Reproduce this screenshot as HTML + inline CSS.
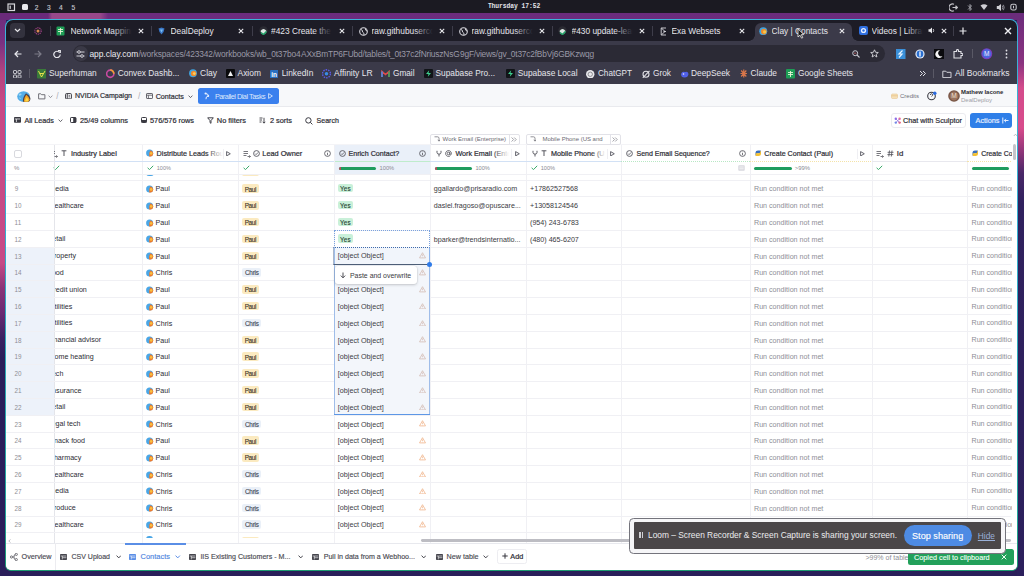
<!DOCTYPE html>
<html><head><meta charset="utf-8"><style>
html,body{margin:0;padding:0;}
body{width:1024px;height:576px;overflow:hidden;position:relative;background:#2a1e5a;font-family:"Liberation Sans",sans-serif;}
</style></head><body>
<div style="position:absolute;left:0px;top:0px;width:1024px;height:576px;background:#2a1e5a"></div>
<div style="position:absolute;left:0px;top:13px;width:6px;height:563px;background:linear-gradient(#6c2c7c 0px,#7a3282 30px,#b4447f 60px,#c84a86 90px,#c64a86 250px,#8a3478 275px,#6a2a72 300px,#3a2262 325px,#2a1e5a 345px)"></div>
<div style="position:absolute;left:1017px;top:13px;width:7px;height:563px;background:linear-gradient(#6c2c7c 0px,#8a3480 50px,#d44c8c 75px,#d84c8c 115px,#8a3478 140px,#4a2868 160px,#30215e 190px,#2b1f5c 100%)"></div>
<div style="position:absolute;left:0px;top:12px;width:1024px;height:8px;background:linear-gradient(90deg,#6a2a7a 0,#6a2a7a 48px,#98488a 52px,#98488a 100px,#6c2c7e 108px,#6b2c7c 100%)"></div>
<div style="position:absolute;left:0px;top:0px;width:1024px;height:13px;background:#1b1a22"></div>
<div style="position:absolute;left:5px;top:19px;width:1013px;height:552px;border-radius:8px 8px 6px 6px;background:linear-gradient(#3cb2da 0,#35aecf 40%,#22a59a 90%,#1c9a70 100%)"></div>
<div style="position:absolute;left:6px;top:20px;width:1011px;height:550px;border-radius:7px 7px 5px 5px;background:#1d1c26;overflow:hidden"></div>
<div style="position:absolute;left:6px;top:41px;width:1011px;height:43px;background:#3b3a49"></div>
<div style="position:absolute;left:6px;top:84px;width:1011px;height:486px;background:#ffffff;border-radius:0 0 5px 5px"></div>
<svg style="position:absolute;left:7px;top:3px;" width="9" height="9" viewBox="0 0 9 9"><rect x="1" y="1" width="6.5" height="6.5" fill="none" stroke="#d8d8dc" stroke-width="1.2"/><rect x="2.6" y="2.6" width="1.2" height="3.3" fill="#d8d8dc"/></svg>
<div style="position:absolute;left:22px;top:4px;width:5.5px;height:6px;background:#e8e8ec;border-radius:1.5px"></div>
<div style="position:absolute;left:34.70px;top:5.00px;font-family:'Liberation Sans';font-size:6.60px;line-height:6.60px;font-weight:400;color:#c4c4cc;white-space:pre;-webkit-text-stroke:0.15px #c4c4cc;">2</div>
<div style="position:absolute;left:47.00px;top:5.00px;font-family:'Liberation Sans';font-size:6.60px;line-height:6.60px;font-weight:400;color:#c4c4cc;white-space:pre;-webkit-text-stroke:0.15px #c4c4cc;">3</div>
<div style="position:absolute;left:59.00px;top:5.00px;font-family:'Liberation Sans';font-size:6.60px;line-height:6.60px;font-weight:400;color:#c4c4cc;white-space:pre;-webkit-text-stroke:0.15px #c4c4cc;">4</div>
<div style="position:absolute;left:71.60px;top:5.00px;font-family:'Liberation Sans';font-size:6.60px;line-height:6.60px;font-weight:400;color:#c4c4cc;white-space:pre;-webkit-text-stroke:0.15px #c4c4cc;">5</div>
<div style="position:absolute;left:487.90px;top:3.75px;font-family:'Liberation Mono';font-size:6.30px;line-height:6.30px;font-weight:700;color:#e4e4ea;white-space:pre;letter-spacing:-0.045px;">Thursday 17:52</div>
<svg style="position:absolute;left:949px;top:3px;" width="9" height="9" viewBox="0 0 9 9"><path d="M5 1.2 A3.6 3.6 0 1 0 5 7.8" fill="none" stroke="#c4c4ca" stroke-width="1.2"/><path d="M3.5 4.5 H8.3 M6.5 2.8 L8.3 4.5 L6.5 6.2" fill="none" stroke="#c4c4ca" stroke-width="1.2"/></svg>
<svg style="position:absolute;left:967px;top:3px;" width="6" height="9" viewBox="0 0 6 9"><path d="M1 2.5 L4.5 6 L3 7.5 V1.5 L4.5 3 L1 6.5" fill="none" stroke="#a8a8b0" stroke-width="0.9"/></svg>
<svg style="position:absolute;left:980px;top:3px;" width="8" height="8" viewBox="0 0 8 8"><path d="M0.5 2.5 Q4 0 7.5 2.5 L4 7 Z" fill="#cfcfd4"/></svg>
<svg style="position:absolute;left:996px;top:3px;" width="9" height="9" viewBox="0 0 9 9"><path d="M0.8 3 H2.5 L5 1 V8 L2.5 6 H0.8 Z" fill="#cfcfd4"/><path d="M6.3 2.6 Q7.4 4.5 6.3 6.4 M7.4 1.8 Q9 4.5 7.4 7.2" fill="none" stroke="#a8a8b0" stroke-width="0.8"/></svg>
<svg style="position:absolute;left:1010px;top:3px;" width="7" height="8" viewBox="0 0 7 8"><rect x="0.8" y="1.2" width="5.4" height="5.8" rx="1.8" fill="none" stroke="#c4c4ca" stroke-width="1.1"/><rect x="3" y="2.8" width="1" height="2.5" fill="#c4c4ca"/></svg>
<div style="position:absolute;left:10px;top:23px;width:14.5px;height:15px;background:#33323e;border-radius:4px"></div>
<svg style="position:absolute;left:14px;top:28px;" width="7" height="5" viewBox="0 0 7 5"><path d="M1 1 L3.5 3.5 L6 1" fill="none" stroke="#e6e6ea" stroke-width="1.2"/></svg>
<svg style="position:absolute;left:34px;top:26.5px;" width="8" height="8" viewBox="0 0 8 8"><circle cx="4" cy="4" r="3.2" fill="none" stroke="#a8458a" stroke-width="1.1" stroke-dasharray="1.2 0.8"/><circle cx="4" cy="4" r="1.5" fill="#d88a50"/></svg>
<div style="position:absolute;left:50px;top:26px;width:1px;height:10px;background:#3e3d4a"></div>
<div style="position:absolute;left:151px;top:26px;width:1px;height:10px;background:#3e3d4a"></div>
<div style="position:absolute;left:251.5px;top:26px;width:1px;height:10px;background:#3e3d4a"></div>
<div style="position:absolute;left:352px;top:26px;width:1px;height:10px;background:#3e3d4a"></div>
<div style="position:absolute;left:452px;top:26px;width:1px;height:10px;background:#3e3d4a"></div>
<div style="position:absolute;left:552px;top:26px;width:1px;height:10px;background:#3e3d4a"></div>
<div style="position:absolute;left:652px;top:26px;width:1px;height:10px;background:#3e3d4a"></div>
<div style="position:absolute;left:953px;top:26px;width:1px;height:10px;background:#3e3d4a"></div>
<div style="position:absolute;left:749px;top:23px;width:109px;height:18px;overflow:hidden"><div style="position:absolute;left:6px;top:0;width:97px;height:18px;background:#3b3a49;border-radius:6px 6px 0 0"></div><div style="position:absolute;left:0;bottom:0;width:6px;height:6px;background:radial-gradient(circle at 0 0,transparent 5.5px,#3b3a49 6px)"></div><div style="position:absolute;right:0;bottom:0;width:6px;height:6px;background:radial-gradient(circle at 100% 0,transparent 5.5px,#3b3a49 6px)"></div></div>
<div style="position:absolute;left:70.5px;top:24px;width:64px;height:14px;overflow:hidden">
<div style="position:absolute;left:0.00px;top:3.00px;font-family:'Liberation Sans';font-size:8.35px;line-height:8.35px;font-weight:400;color:#e6e6ec;white-space:pre;">Network Mapping Engine</div>
</div>
<div style="position:absolute;left:112.5px;top:24px;width:22px;height:14px;background:linear-gradient(90deg,rgba(29,28,38,0),#1d1c26 85%)"></div>
<svg style="position:absolute;left:138px;top:27.6px;" width="6" height="6" viewBox="0 0 6 6"><path d="M0.8 0.8 L5.2 5.2 M5.2 0.8 L0.8 5.2" stroke="#e8e8ec" stroke-width="1.1"/></svg>
<div style="position:absolute;left:170.5px;top:24px;width:70px;height:14px;overflow:hidden">
<div style="position:absolute;left:0.00px;top:3.00px;font-family:'Liberation Sans';font-size:8.35px;line-height:8.35px;font-weight:400;color:#e6e6ec;white-space:pre;">DealDeploy</div>
</div>
<svg style="position:absolute;left:238px;top:27.6px;" width="6" height="6" viewBox="0 0 6 6"><path d="M0.8 0.8 L5.2 5.2 M5.2 0.8 L0.8 5.2" stroke="#e8e8ec" stroke-width="1.1"/></svg>
<div style="position:absolute;left:271.0px;top:24px;width:64px;height:14px;overflow:hidden">
<div style="position:absolute;left:0.00px;top:3.00px;font-family:'Liberation Sans';font-size:8.35px;line-height:8.35px;font-weight:400;color:#e6e6ec;white-space:pre;">#423 Create the new</div>
</div>
<div style="position:absolute;left:313.0px;top:24px;width:22px;height:14px;background:linear-gradient(90deg,rgba(29,28,38,0),#1d1c26 85%)"></div>
<svg style="position:absolute;left:338.5px;top:27.6px;" width="6" height="6" viewBox="0 0 6 6"><path d="M0.8 0.8 L5.2 5.2 M5.2 0.8 L0.8 5.2" stroke="#e8e8ec" stroke-width="1.1"/></svg>
<div style="position:absolute;left:371.5px;top:24px;width:64px;height:14px;overflow:hidden">
<div style="position:absolute;left:0.00px;top:3.00px;font-family:'Liberation Sans';font-size:8.35px;line-height:8.35px;font-weight:400;color:#e6e6ec;white-space:pre;">raw.githubusercontent.com</div>
</div>
<div style="position:absolute;left:413.5px;top:24px;width:22px;height:14px;background:linear-gradient(90deg,rgba(29,28,38,0),#1d1c26 85%)"></div>
<svg style="position:absolute;left:439px;top:27.6px;" width="6" height="6" viewBox="0 0 6 6"><path d="M0.8 0.8 L5.2 5.2 M5.2 0.8 L0.8 5.2" stroke="#e8e8ec" stroke-width="1.1"/></svg>
<div style="position:absolute;left:471.5px;top:24px;width:64px;height:14px;overflow:hidden">
<div style="position:absolute;left:0.00px;top:3.00px;font-family:'Liberation Sans';font-size:8.35px;line-height:8.35px;font-weight:400;color:#e6e6ec;white-space:pre;">raw.githubusercontent.com</div>
</div>
<div style="position:absolute;left:513.5px;top:24px;width:22px;height:14px;background:linear-gradient(90deg,rgba(29,28,38,0),#1d1c26 85%)"></div>
<svg style="position:absolute;left:539px;top:27.6px;" width="6" height="6" viewBox="0 0 6 6"><path d="M0.8 0.8 L5.2 5.2 M5.2 0.8 L0.8 5.2" stroke="#e8e8ec" stroke-width="1.1"/></svg>
<div style="position:absolute;left:571.5px;top:24px;width:64px;height:14px;overflow:hidden">
<div style="position:absolute;left:0.00px;top:3.00px;font-family:'Liberation Sans';font-size:8.35px;line-height:8.35px;font-weight:400;color:#e6e6ec;white-space:pre;">#430 update-lead-flow</div>
</div>
<div style="position:absolute;left:613.5px;top:24px;width:22px;height:14px;background:linear-gradient(90deg,rgba(29,28,38,0),#1d1c26 85%)"></div>
<svg style="position:absolute;left:639px;top:27.6px;" width="6" height="6" viewBox="0 0 6 6"><path d="M0.8 0.8 L5.2 5.2 M5.2 0.8 L0.8 5.2" stroke="#e8e8ec" stroke-width="1.1"/></svg>
<div style="position:absolute;left:671.5px;top:24px;width:70px;height:14px;overflow:hidden">
<div style="position:absolute;left:0.00px;top:3.00px;font-family:'Liberation Sans';font-size:8.35px;line-height:8.35px;font-weight:400;color:#e6e6ec;white-space:pre;">Exa Websets</div>
</div>
<svg style="position:absolute;left:739px;top:27.6px;" width="6" height="6" viewBox="0 0 6 6"><path d="M0.8 0.8 L5.2 5.2 M5.2 0.8 L0.8 5.2" stroke="#e8e8ec" stroke-width="1.1"/></svg>
<div style="position:absolute;left:771.5px;top:24px;width:70px;height:14px;overflow:hidden">
<div style="position:absolute;left:0.00px;top:3.00px;font-family:'Liberation Sans';font-size:8.35px;line-height:8.35px;font-weight:400;color:#e6e6ec;white-space:pre;">Clay | Contacts</div>
</div>
<svg style="position:absolute;left:839px;top:27.6px;" width="6" height="6" viewBox="0 0 6 6"><path d="M0.8 0.8 L5.2 5.2 M5.2 0.8 L0.8 5.2" stroke="#e8e8ec" stroke-width="1.1"/></svg>
<div style="position:absolute;left:871.5px;top:24px;width:54px;height:14px;overflow:hidden">
<div style="position:absolute;left:0.00px;top:3.00px;font-family:'Liberation Sans';font-size:8.35px;line-height:8.35px;font-weight:400;color:#e6e6ec;white-space:pre;">Videos | Library</div>
</div>
<div style="position:absolute;left:905.5px;top:24px;width:20px;height:14px;background:linear-gradient(90deg,rgba(29,28,38,0),#1d1c26 85%)"></div>
<svg style="position:absolute;left:56px;top:26px;" width="9" height="10" viewBox="0 0 9 10"><rect x="0.5" y="0.5" width="8" height="9" rx="1" fill="#1e9e56"/><path d="M2 3.5 H7 M4.5 2 V8.5 M2 5.5 H7" stroke="#e8f4d8" stroke-width="0.9"/></svg>
<svg style="position:absolute;left:158px;top:27px;" width="7" height="8" viewBox="0 0 7 8"><path d="M0.5 1.5 L3.5 0.5 L6.5 1.5 L5.5 5 L3.5 7.5 L1.5 5 Z" fill="#3a78c8"/><path d="M2 2.5 L3.5 5.5 L5 2.5" fill="#7ec0f0"/></svg>
<svg style="position:absolute;left:258.5px;top:26px;" width="9" height="9" viewBox="0 0 9 9"><circle cx="4.5" cy="4.5" r="4.2" fill="#2b2b33"/><path d="M1.5 5 Q4.5 1 7.5 5 L6 8 H3 Z" fill="#dfe8e4"/><path d="M2 6.5 L4.5 8.5 L7.5 5.5" stroke="#25a36a" stroke-width="1.6" fill="none"/></svg>
<svg style="position:absolute;left:558px;top:26px;" width="9" height="9" viewBox="0 0 9 9"><circle cx="4.5" cy="4.5" r="4.2" fill="#2b2b33"/><path d="M1.5 5 Q4.5 1 7.5 5 L6 8 H3 Z" fill="#dfe8e4"/><path d="M2 6.5 L4.5 8.5 L7.5 5.5" stroke="#25a36a" stroke-width="1.6" fill="none"/></svg>
<svg style="position:absolute;left:358.5px;top:26.5px;" width="9" height="9" viewBox="0 0 9 9"><circle cx="4.5" cy="4.5" r="3.8" fill="none" stroke="#d8d8de" stroke-width="1.1"/><path d="M2 2.5 Q4 3 3.5 5 Q5.5 6 5 8 M6.5 1.5 Q6 3.5 8 4" fill="none" stroke="#d8d8de" stroke-width="1"/></svg>
<svg style="position:absolute;left:458.5px;top:26.5px;" width="9" height="9" viewBox="0 0 9 9"><circle cx="4.5" cy="4.5" r="3.8" fill="none" stroke="#d8d8de" stroke-width="1.1"/><path d="M2 2.5 Q4 3 3.5 5 Q5.5 6 5 8 M6.5 1.5 Q6 3.5 8 4" fill="none" stroke="#d8d8de" stroke-width="1"/></svg>
<svg style="position:absolute;left:660px;top:26.5px;" width="7" height="9" viewBox="0 0 7 9"><path d="M1.2 1 H6 M1.2 8 H6 M1.2 1 V8 M1.5 1.2 L5 4.5 L1.5 7.8 M3.5 4.5 H6" fill="none" stroke="#d8d8de" stroke-width="0.9"/></svg>
<svg style="position:absolute;left:759px;top:26.5px;" width="8.5" height="8.5" viewBox="0 0 8.5 8.5"><circle cx="4.25" cy="4.25" r="4" fill="#3fa3e0"/><circle cx="4.8" cy="4.6" r="2.8" fill="#f08a2a"/><circle cx="5.6" cy="4.8" r="1.6" fill="#f5c84a"/></svg>
<svg style="position:absolute;left:859px;top:26px;" width="9" height="9" viewBox="0 0 9 9"><rect x="0" y="0" width="9" height="9" rx="2" fill="#2f6fe0"/><circle cx="4.5" cy="4.5" r="2.6" fill="#e8f0ff"/><circle cx="4.5" cy="4.5" r="1.2" fill="#2f6fe0"/></svg>
<svg style="position:absolute;left:928px;top:27px;" width="7" height="7" viewBox="0 0 7 7"><path d="M0.5 2.3 H2 L4 0.5 V6.5 L2 4.7 H0.5 Z" fill="#e8e8ec"/><path d="M5.2 2 Q6.2 3.5 5.2 5" fill="none" stroke="#e8e8ec" stroke-width="0.8"/></svg>
<svg style="position:absolute;left:940.5px;top:27.6px;" width="6" height="6" viewBox="0 0 6 6"><path d="M0.8 0.8 L5.2 5.2 M5.2 0.8 L0.8 5.2" stroke="#e8e8ec" stroke-width="1.1"/></svg>
<svg style="position:absolute;left:958.5px;top:26.5px;" width="8" height="8" viewBox="0 0 8 8"><path d="M4 0.5 V7.5 M0.5 4 H7.5" stroke="#e8e8ec" stroke-width="1.2"/></svg>
<svg style="position:absolute;left:1004px;top:27px;" width="8" height="8" viewBox="0 0 8 8"><path d="M1 1 L7 7 M7 1 L1 7" stroke="#f0f0f4" stroke-width="1.4"/></svg>
<svg style="position:absolute;left:14px;top:50px;" width="8" height="8" viewBox="0 0 8 8"><path d="M7.5 4 H1.2 M4 1 L1 4 L4 7" fill="none" stroke="#e8e8ee" stroke-width="1.2"/></svg>
<svg style="position:absolute;left:33.5px;top:50px;" width="8" height="8" viewBox="0 0 8 8"><path d="M0.5 4 H6.8 M4 1 L7 4 L4 7" fill="none" stroke="#7c7b88" stroke-width="1.2"/></svg>
<svg style="position:absolute;left:52.5px;top:50px;" width="8" height="8" viewBox="0 0 8 8"><path d="M6.6 2.6 A3.2 3.2 0 1 0 7.2 4.5" fill="none" stroke="#e8e8ee" stroke-width="1.2"/><path d="M5 0.6 H7.3 V3" fill="none" stroke="#e8e8ee" stroke-width="1.2"/></svg>
<div style="position:absolute;left:72.5px;top:45px;width:812.5px;height:17px;background:#2b2a35;border-radius:9px"></div>
<div style="position:absolute;left:73.5px;top:46px;width:14px;height:15px;background:#3a3946;border-radius:7.5px"></div>
<svg style="position:absolute;left:76px;top:49.5px;" width="9" height="8" viewBox="0 0 9 8"><path d="M0.5 2 H8.5 M0.5 6 H8.5" stroke="#e0e0e6" stroke-width="0.9"/><circle cx="3" cy="2" r="1.3" fill="#2b2a35" stroke="#e0e0e6" stroke-width="0.9"/><circle cx="6" cy="6" r="1.3" fill="#2b2a35" stroke="#e0e0e6" stroke-width="0.9"/></svg>
<div style="position:absolute;left:89.40px;top:50.00px;font-family:'Liberation Sans';font-size:8.40px;line-height:8.40px;font-weight:400;color:#ececf2;white-space:pre;letter-spacing:0.003px;">app.clay.com</div>
<div style="position:absolute;left:138.40px;top:50.00px;font-family:'Liberation Sans';font-size:8.40px;line-height:8.40px;font-weight:400;color:#9a99a6;white-space:pre;letter-spacing:-0.129px;">/workspaces/423342/workbooks/wb_0t37bo4</div>
<div style="position:absolute;left:301.00px;top:50.00px;font-family:'Liberation Sans';font-size:8.40px;line-height:8.40px;font-weight:400;color:#9a99a6;white-space:pre;letter-spacing:-0.189px;">AXxBmTP6FUbd/tables/t_0t37c2fNriuszNsG</div>
<div style="position:absolute;left:460.00px;top:50.00px;font-family:'Liberation Sans';font-size:8.40px;line-height:8.40px;font-weight:400;color:#9a99a6;white-space:pre;letter-spacing:-0.207px;">9gF/views/gv_0t37c2fBbVj6GBKzwqg</div>
<svg style="position:absolute;left:852px;top:49.5px;" width="8" height="8" viewBox="0 0 8 8"><circle cx="3.2" cy="3.2" r="2.5" fill="none" stroke="#c8c8d0" stroke-width="1"/><path d="M5 5 L7.5 7.5" stroke="#c8c8d0" stroke-width="1.1"/><path d="M2 3.2 H4.4" stroke="#e07070" stroke-width="0.7"/></svg>
<svg style="position:absolute;left:869.5px;top:49px;" width="9" height="9" viewBox="0 0 9 9"><path d="M4.5 0.8 L5.6 3.3 L8.3 3.5 L6.2 5.3 L6.9 8 L4.5 6.5 L2.1 8 L2.8 5.3 L0.7 3.5 L3.4 3.3 Z" fill="none" stroke="#d8d8de" stroke-width="0.9"/></svg>
<svg style="position:absolute;left:896px;top:48.5px;" width="9.5" height="10" viewBox="0 0 9.5 10"><rect x="0" y="0" width="9.5" height="10" fill="#3a8fd8"/><path d="M6.5 1.5 L3 5 H6 L3 8.5" stroke="#e8f4ff" stroke-width="1.2" fill="none"/></svg>
<svg style="position:absolute;left:915px;top:48.5px;" width="10" height="10" viewBox="0 0 10 10"><circle cx="5" cy="5" r="4.6" fill="#e8eef8"/><circle cx="5" cy="5" r="3.4" fill="#2a6fd0"/><rect x="4.3" y="2.5" width="1.4" height="5" fill="#f0f4ff"/></svg>
<svg style="position:absolute;left:934px;top:48.5px;" width="10" height="10" viewBox="0 0 10 10"><rect x="0" y="0" width="10" height="10" fill="#0a0a0e"/><path d="M6 1.5 A3.8 3.8 0 1 0 8.5 7 A3 3 0 0 1 6 1.5 Z" fill="#f4f4f4"/></svg>
<svg style="position:absolute;left:953px;top:48.5px;" width="10" height="10" viewBox="0 0 10 10"><path d="M1 2.5 H3.5 V1.5 A1 1 0 0 1 5.5 1.5 V2.5 H8 V4.5 H9 A1 1 0 0 1 9 6.5 H8 V9 H1 Z" fill="none" stroke="#e0e0e6" stroke-width="1.1"/></svg>
<div style="position:absolute;left:971.5px;top:49px;width:1px;height:9px;background:#5a5966"></div>
<svg style="position:absolute;left:981px;top:48px;" width="11.5" height="11.5" viewBox="0 0 11.5 11.5"><circle cx="5.75" cy="5.75" r="5.5" fill="#7a3fc0"/><circle cx="5.75" cy="5.75" r="4.4" fill="#4a6ae0"/><text x="5.75" y="8.2" font-family="Liberation Sans" font-size="6.5" fill="#f0e8ff" text-anchor="middle">M</text></svg>
<svg style="position:absolute;left:1004.5px;top:48.5px;" width="3" height="10" viewBox="0 0 3 10"><circle cx="1.5" cy="1.5" r="0.9" fill="#e0e0e6"/><circle cx="1.5" cy="5" r="0.9" fill="#e0e0e6"/><circle cx="1.5" cy="8.5" r="0.9" fill="#e0e0e6"/></svg>
<svg style="position:absolute;left:13px;top:69.5px;" width="8.5" height="8.5" viewBox="0 0 8.5 8.5"><rect x="0.5" y="0.5" width="3" height="3" rx="0.6" fill="none" stroke="#d8d8de" stroke-width="0.9"/><rect x="5" y="0.5" width="3" height="3" rx="0.6" fill="none" stroke="#d8d8de" stroke-width="0.9"/><rect x="0.5" y="5" width="3" height="3" rx="0.6" fill="none" stroke="#d8d8de" stroke-width="0.9"/><rect x="5" y="5" width="3" height="3" rx="0.6" fill="none" stroke="#d8d8de" stroke-width="0.9"/></svg>
<div style="position:absolute;left:29px;top:69px;width:1px;height:9px;background:#5a5966"></div>
<div style="position:absolute;left:49.00px;top:69.00px;font-family:'Liberation Sans';font-size:8.35px;line-height:8.35px;font-weight:400;color:#e6e6ec;white-space:pre;letter-spacing:-0.011px;">Superhuman</div>
<div style="position:absolute;left:117.80px;top:69.00px;font-family:'Liberation Sans';font-size:8.35px;line-height:8.35px;font-weight:400;color:#e6e6ec;white-space:pre;letter-spacing:-0.009px;">Convex Dashb...</div>
<div style="position:absolute;left:200.00px;top:69.00px;font-family:'Liberation Sans';font-size:8.50px;line-height:8.50px;font-weight:400;color:#e6e6ec;white-space:pre;letter-spacing:-0.001px;">Clay</div>
<div style="position:absolute;left:237.50px;top:69.00px;font-family:'Liberation Sans';font-size:8.45px;line-height:8.45px;font-weight:400;color:#e6e6ec;white-space:pre;letter-spacing:0.004px;">Axiom</div>
<div style="position:absolute;left:281.70px;top:69.00px;font-family:'Liberation Sans';font-size:8.40px;line-height:8.40px;font-weight:400;color:#e6e6ec;white-space:pre;letter-spacing:-0.007px;">LinkedIn</div>
<div style="position:absolute;left:334.00px;top:69.00px;font-family:'Liberation Sans';font-size:8.50px;line-height:8.50px;font-weight:400;color:#e6e6ec;white-space:pre;letter-spacing:0.002px;">Affinity LR</div>
<div style="position:absolute;left:393.00px;top:70.00px;font-family:'Liberation Sans';font-size:8.25px;line-height:8.25px;font-weight:400;color:#e6e6ec;white-space:pre;letter-spacing:-0.009px;">Gmail</div>
<div style="position:absolute;left:435.60px;top:69.00px;font-family:'Liberation Sans';font-size:8.30px;line-height:8.30px;font-weight:400;color:#e6e6ec;white-space:pre;letter-spacing:-0.008px;">Supabase Pro...</div>
<div style="position:absolute;left:517.70px;top:69.00px;font-family:'Liberation Sans';font-size:8.35px;line-height:8.35px;font-weight:400;color:#e6e6ec;white-space:pre;">Supabase Local</div>
<div style="position:absolute;left:598.00px;top:70.00px;font-family:'Liberation Sans';font-size:8.15px;line-height:8.15px;font-weight:400;color:#e6e6ec;white-space:pre;letter-spacing:0.004px;">ChatGPT</div>
<div style="position:absolute;left:653.00px;top:69.00px;font-family:'Liberation Sans';font-size:8.30px;line-height:8.30px;font-weight:400;color:#e6e6ec;white-space:pre;letter-spacing:0.003px;">Grok</div>
<div style="position:absolute;left:691.00px;top:69.00px;font-family:'Liberation Sans';font-size:8.35px;line-height:8.35px;font-weight:400;color:#e6e6ec;white-space:pre;">DeepSeek</div>
<div style="position:absolute;left:750.60px;top:69.00px;font-family:'Liberation Sans';font-size:8.35px;line-height:8.35px;font-weight:400;color:#e6e6ec;white-space:pre;letter-spacing:-0.010px;">Claude</div>
<div style="position:absolute;left:798.00px;top:69.00px;font-family:'Liberation Sans';font-size:8.30px;line-height:8.30px;font-weight:400;color:#e6e6ec;white-space:pre;letter-spacing:0.007px;">Google Sheets</div>
<svg style="position:absolute;left:36.5px;top:69px;" width="9.5" height="9.5" viewBox="0 0 9.5 9.5"><rect x="0" y="0" width="9.5" height="9.5" rx="1" fill="#3a7a3a"/><path d="M1.5 2 L4.5 8 L8 2 M3 4.5 H6.5" stroke="#e8e04a" stroke-width="1" fill="none"/></svg>
<svg style="position:absolute;left:106px;top:69px;" width="8.5" height="9.5" viewBox="0 0 8.5 9.5"><circle cx="4.25" cy="4.75" r="3.6" fill="none" stroke="#c84aa0" stroke-width="1.6"/><path d="M4.25 1 A3.6 3.6 0 0 1 7.8 4.7" fill="none" stroke="#f0a030" stroke-width="1.6"/></svg>
<svg style="position:absolute;left:189px;top:69.3px;" width="8" height="8.5" viewBox="0 0 8 8.5"><circle cx="4" cy="4.25" r="3.9" fill="#3fa3e0"/><circle cx="4.6" cy="4.5" r="2.7" fill="#f08a2a"/><circle cx="5.3" cy="4.6" r="1.4" fill="#f8d060"/></svg>
<svg style="position:absolute;left:225.5px;top:69.3px;" width="9" height="9" viewBox="0 0 9 9"><rect x="0" y="0" width="9" height="9" rx="1" fill="#0a0a0c"/><path d="M4.5 2 L7 7 H2 Z" fill="#f0f0f0"/></svg>
<svg style="position:absolute;left:269.5px;top:69.5px;" width="8.5" height="8.5" viewBox="0 0 8.5 8.5"><rect x="0" y="0" width="8.5" height="8.5" rx="1" fill="#2a6fc0"/><text x="4.2" y="7.2" font-family="Liberation Sans" font-weight="700" font-size="6.5" fill="#fff" text-anchor="middle">in</text></svg>
<svg style="position:absolute;left:322px;top:69px;" width="9" height="9.5" viewBox="0 0 9 9.5"><circle cx="4.5" cy="4.75" r="4" fill="none" stroke="#5a5ae0" stroke-width="1.5" stroke-dasharray="1.5 1"/><circle cx="4.5" cy="4.75" r="1.8" fill="#3a8ae8"/></svg>
<svg style="position:absolute;left:381px;top:69.5px;" width="9" height="8" viewBox="0 0 9 8"><path d="M1 7 V1.5 L4.5 4.5 L8 1.5 V7" fill="none" stroke="#e04a4a" stroke-width="1.6"/><path d="M1 7 V1.5" stroke="#4a8ae8" stroke-width="1.6"/><path d="M8 7 V1.5" stroke="#3aa860" stroke-width="1.6"/></svg>
<svg style="position:absolute;left:424px;top:69.2px;" width="9" height="9" viewBox="0 0 9 9"><rect x="0" y="0" width="9" height="9" rx="1" fill="#111418"/><path d="M5.2 1.2 L2 5 H4.5 L3.8 7.8 L7 4 H4.5 Z" fill="#3ecf8e"/></svg>
<svg style="position:absolute;left:506px;top:69.2px;" width="9" height="9" viewBox="0 0 9 9"><rect x="0" y="0" width="9" height="9" rx="1" fill="#111418"/><path d="M5.2 1.2 L2 5 H4.5 L3.8 7.8 L7 4 H4.5 Z" fill="#3ecf8e"/></svg>
<svg style="position:absolute;left:586px;top:69.5px;" width="8.5" height="8.5" viewBox="0 0 8.5 8.5"><circle cx="4.25" cy="4.25" r="4.2" fill="#e8e8ec"/><circle cx="4.25" cy="4.25" r="2.2" fill="none" stroke="#8a8a90" stroke-width="1"/></svg>
<svg style="position:absolute;left:641.5px;top:69.5px;" width="8" height="8.5" viewBox="0 0 8 8.5"><circle cx="4" cy="4.25" r="3" fill="none" stroke="#e0e0e6" stroke-width="1.1"/><path d="M0.8 7.8 L7.5 0.8" stroke="#e0e0e6" stroke-width="1.1"/></svg>
<svg style="position:absolute;left:679.5px;top:69.5px;" width="9" height="8.5" viewBox="0 0 9 8.5"><path d="M1 4 Q2 1 5 2 Q8 1 8.5 4 Q8 7.5 4.5 7.5 Q1 7.5 1 4 Z" fill="#5060e8"/><circle cx="3.5" cy="4" r="0.8" fill="#e8ecff"/></svg>
<svg style="position:absolute;left:739.5px;top:69.3px;" width="7.5" height="9" viewBox="0 0 7.5 9"><path d="M3.75 0.5 V8.5 M0.5 4.5 H7 M1.2 1.5 L6.3 7.5 M6.3 1.5 L1.2 7.5" stroke="#d8764a" stroke-width="1.2"/></svg>
<svg style="position:absolute;left:785.5px;top:69px;" width="9" height="9.5" viewBox="0 0 9 9.5"><rect x="0" y="0" width="9" height="9.5" rx="1" fill="#1e9e56"/><path d="M2 3.5 H7 M4.5 2 V8 M2 5.5 H7" stroke="#e8f4d8" stroke-width="0.9"/></svg>
<svg style="position:absolute;left:918.5px;top:70px;" width="7" height="7" viewBox="0 0 7 7"><path d="M1 1 L3.5 3.5 L1 6 M4 1 L6.5 3.5 L4 6" fill="none" stroke="#e0e0e6" stroke-width="1"/></svg>
<div style="position:absolute;left:933px;top:69px;width:1px;height:9px;background:#5a5966"></div>
<svg style="position:absolute;left:941.5px;top:69.5px;" width="10" height="8.5" viewBox="0 0 10 8.5"><path d="M0.8 1.2 H3.8 L4.8 2.3 H9 V7.6 H0.8 Z" fill="none" stroke="#d8d8de" stroke-width="0.95"/></svg>
<div style="position:absolute;left:955.00px;top:69.00px;font-family:'Liberation Sans';font-size:8.50px;line-height:8.50px;font-weight:400;color:#e6e6ec;white-space:pre;letter-spacing:0.006px;">All Bookmarks</div>
<div style="position:absolute;left:6px;top:84px;width:1011px;height:23px;background:#f7f8fa;border-bottom:1px solid #e9eaee;box-sizing:border-box"></div>
<svg style="position:absolute;left:16.5px;top:90.5px;" width="14" height="11" viewBox="0 0 14 11"><ellipse cx="6.6" cy="5.5" rx="6.4" ry="5.3" fill="#52ade8"/><path d="M1.5 3.5 Q3 2 4.8 3 Q4 5 2.2 4.8 Z M2 6.5 Q3.5 6 4 8 Q2.8 8.4 2 6.5 Z" fill="#9ad4f2"/><path d="M5.8 10.8 Q5.6 6 9 2.3 Q12.6 3.8 13.4 7 Q13.6 10.4 11 10.9 Z" fill="#48424e"/><path d="M6.8 10.7 Q7 6.8 9.2 3.8 Q12 5.8 12.6 8.6 Q12.5 10.6 10.5 10.7 Z" fill="#f5a623"/><path d="M8 10.6 Q8.6 8 9.8 6.6 Q11.3 8.2 11.5 10.4 Z" fill="#fdd84a"/></svg>
<svg style="position:absolute;left:38px;top:93px;" width="7.5" height="6.5" viewBox="0 0 7.5 6.5"><path d="M0.6 0.8 H2.8 L3.6 1.7 H6.9 V5.9 H0.6 Z" fill="none" stroke="#6a6a72" stroke-width="0.95"/></svg>
<svg style="position:absolute;left:48px;top:94.5px;" width="5" height="3.5" viewBox="0 0 5 3.5"><path d="M0.6 0.6 L2.5 2.6 L4.4 0.6" fill="none" stroke="#8a8a92" stroke-width="0.9"/></svg>
<div style="position:absolute;left:56.30px;top:92.00px;font-family:'Liberation Sans';font-size:8.50px;line-height:8.50px;font-weight:400;color:#b0b0b8;white-space:pre;">/</div>
<svg style="position:absolute;left:65px;top:92.8px;" width="7" height="6.5" viewBox="0 0 7 6.5"><rect x="0.6" y="0.6" width="5.8" height="5.3" rx="0.8" fill="none" stroke="#3a3a42" stroke-width="1"/><path d="M2.3 1 V5.5" stroke="#3a3a42" stroke-width="0.9"/><path d="M3.6 2.7 H5 M3.6 3.9 H5" stroke="#3a3a42" stroke-width="0.7"/></svg>
<div style="position:absolute;left:75.00px;top:92.00px;font-family:'Liberation Sans';font-size:7.00px;line-height:7.00px;font-weight:400;color:#2e2e36;white-space:pre;letter-spacing:0.013px;-webkit-text-stroke:0.2px #2e2e36;">NVIDIA Campaign</div>
<div style="position:absolute;left:138.00px;top:92.00px;font-family:'Liberation Sans';font-size:8.50px;line-height:8.50px;font-weight:400;color:#b0b0b8;white-space:pre;">/</div>
<svg style="position:absolute;left:145.5px;top:93px;" width="7" height="6" viewBox="0 0 7 6"><rect x="0.5" y="0.5" width="6" height="5" rx="0.6" fill="none" stroke="#55555d" stroke-width="0.9"/><path d="M0.5 2.2 H6.5 M2.4 2.2 V5.5" stroke="#55555d" stroke-width="0.8"/></svg>
<div style="position:absolute;left:155.70px;top:94.00px;font-family:'Liberation Sans';font-size:7.15px;line-height:7.15px;font-weight:400;color:#2e2e36;white-space:pre;letter-spacing:0.010px;-webkit-text-stroke:0.2px #2e2e36;">Contacts</div>
<svg style="position:absolute;left:187.5px;top:94.5px;" width="5" height="3.5" viewBox="0 0 5 3.5"><path d="M0.6 0.6 L2.5 2.6 L4.4 0.6" fill="none" stroke="#55555d" stroke-width="0.9"/></svg>
<div style="position:absolute;left:198.1px;top:87.5px;width:80.7px;height:16.8px;background:#3a80ee;border-radius:2.5px"></div>
<svg style="position:absolute;left:204.3px;top:92px;" width="6" height="8" viewBox="0 0 6 8"><circle cx="1.6" cy="1.5" r="1.1" fill="#e6efff"/><path d="M1.6 1.5 Q4.8 2 4.3 4 Q1.5 4.5 2 7.2" fill="none" stroke="#e6efff" stroke-width="1"/><circle cx="4.3" cy="4" r="0.9" fill="#e6efff"/></svg>
<div style="position:absolute;left:214.90px;top:93.00px;font-family:'Liberation Sans';font-size:7.30px;line-height:7.30px;font-weight:400;color:#dbe7fc;white-space:pre;letter-spacing:-0.479px;">Parallel Dial Tasks</div>
<svg style="position:absolute;left:267.5px;top:93px;" width="5" height="6" viewBox="0 0 5 6"><path d="M0.6 0.6 L4.4 3 L0.6 5.4 Z" fill="none" stroke="#d6e4fb" stroke-width="0.9"/></svg>
<svg style="position:absolute;left:891px;top:92.5px;" width="7" height="6" viewBox="0 0 7 6"><rect x="0.5" y="1" width="6" height="4.5" rx="1" fill="#f6e0b8" stroke="#e8c890" stroke-width="0.6"/><path d="M0.5 2.8 H6.5" stroke="#e0b878" stroke-width="0.6"/></svg>
<div style="position:absolute;left:900.00px;top:93.00px;font-family:'Liberation Sans';font-size:6.00px;line-height:6.00px;font-weight:400;color:#707078;white-space:pre;">Credits</div>
<svg style="position:absolute;left:926.5px;top:91px;" width="10" height="10" viewBox="0 0 10 10"><circle cx="4.5" cy="5" r="3.8" fill="none" stroke="#3a3a42" stroke-width="1.1"/><path d="M3.3 4 Q3.5 2.6 4.7 2.7 Q6 2.9 5.6 4.2 Q5 5 4.6 5.5" fill="none" stroke="#3a3a42" stroke-width="0.9"/><circle cx="7.8" cy="2.3" r="1.7" fill="#2a6ae0"/></svg>
<svg style="position:absolute;left:947.8px;top:89.8px;" width="12" height="12" viewBox="0 0 12 12"><circle cx="6" cy="6" r="5.8" fill="#7a5646"/><circle cx="6" cy="6" r="4.4" fill="#9a7460"/><text x="6" y="8.4" font-family="Liberation Sans" font-size="6.6" fill="#f0e0d0" text-anchor="middle">M</text></svg>
<div style="position:absolute;left:961.00px;top:90.00px;font-family:'Liberation Sans';font-size:5.95px;line-height:5.95px;font-weight:700;color:#2a2a30;white-space:pre;letter-spacing:0.006px;">Mathew Iacone</div>
<div style="position:absolute;left:961.00px;top:97.00px;font-family:'Liberation Sans';font-size:6.00px;line-height:6.00px;font-weight:400;color:#a0a0a8;white-space:pre;letter-spacing:-0.002px;">DealDeploy</div>
<svg style="position:absolute;left:14px;top:117.3px;" width="7" height="5.8" viewBox="0 0 7 5.8"><rect x="0" y="0" width="7" height="5.8" rx="0.8" fill="#3a3a42"/><path d="M0.8 2 H6.2 M2.4 2 V5" stroke="#f4f4f6" stroke-width="0.8"/></svg>
<div style="position:absolute;left:24.40px;top:117.00px;font-family:'Liberation Sans';font-size:7.20px;line-height:7.20px;font-weight:400;color:#2c2c34;white-space:pre;letter-spacing:-0.002px;-webkit-text-stroke:0.2px #2c2c34;">All Leads</div>
<svg style="position:absolute;left:57.5px;top:119px;" width="5" height="3.5" viewBox="0 0 5 3.5"><path d="M0.6 0.6 L2.5 2.6 L4.4 0.6" fill="none" stroke="#55555d" stroke-width="0.9"/></svg>
<svg style="position:absolute;left:70px;top:117.2px;" width="6.5" height="6" viewBox="0 0 6.5 6"><rect x="0.5" y="0.5" width="5.5" height="5" rx="0.7" fill="none" stroke="#3a3a42" stroke-width="1"/><rect x="3.2" y="0.5" width="2.8" height="5" fill="#3a3a42"/></svg>
<div style="position:absolute;left:80.00px;top:117.00px;font-family:'Liberation Sans';font-size:7.40px;line-height:7.40px;font-weight:400;color:#2c2c34;white-space:pre;letter-spacing:-0.010px;-webkit-text-stroke:0.2px #2c2c34;">25/49 columns</div>
<svg style="position:absolute;left:140.8px;top:117.2px;" width="6" height="6" viewBox="0 0 6 6"><rect x="0.5" y="0.5" width="5" height="5" rx="0.8" fill="none" stroke="#3a3a42" stroke-width="1"/><rect x="0.5" y="3" width="5" height="2.5" fill="#3a3a42"/></svg>
<div style="position:absolute;left:150.00px;top:117.00px;font-family:'Liberation Sans';font-size:7.35px;line-height:7.35px;font-weight:400;color:#2c2c34;white-space:pre;letter-spacing:-0.011px;-webkit-text-stroke:0.2px #2c2c34;">576/576 rows</div>
<svg style="position:absolute;left:206.5px;top:116.8px;" width="7" height="7" viewBox="0 0 7 7"><path d="M0.7 0.8 H6.3 L4 3.6 V6.3 L3 5.6 V3.6 Z" fill="none" stroke="#3a3a42" stroke-width="0.95"/></svg>
<div style="position:absolute;left:216.80px;top:117.00px;font-family:'Liberation Sans';font-size:7.40px;line-height:7.40px;font-weight:400;color:#2c2c34;white-space:pre;-webkit-text-stroke:0.2px #2c2c34;">No filters</div>
<svg style="position:absolute;left:259px;top:116.8px;" width="7" height="7" viewBox="0 0 7 7"><path d="M0.5 1 H3.5 M0.5 3 H3 M0.5 5 H2.5" fill="none" stroke="#3a3a42" stroke-width="0.9"/><path d="M5 0.8 V6 M3.8 4.8 L5 6.2 L6.2 4.8" fill="none" stroke="#3a3a42" stroke-width="0.9"/></svg>
<div style="position:absolute;left:270.00px;top:117.00px;font-family:'Liberation Sans';font-size:7.35px;line-height:7.35px;font-weight:400;color:#2c2c34;white-space:pre;letter-spacing:-0.008px;-webkit-text-stroke:0.2px #2c2c34;">2 sorts</div>
<svg style="position:absolute;left:305px;top:116.6px;" width="8" height="8" viewBox="0 0 8 8"><circle cx="3.4" cy="3.4" r="2.7" fill="none" stroke="#3a3a42" stroke-width="1"/><path d="M5.4 5.4 L7.4 7.4" stroke="#3a3a42" stroke-width="1"/></svg>
<div style="position:absolute;left:316.60px;top:117.00px;font-family:'Liberation Sans';font-size:7.00px;line-height:7.00px;font-weight:400;color:#2c2c34;white-space:pre;letter-spacing:0.003px;-webkit-text-stroke:0.2px #2c2c34;">Search</div>
<div style="position:absolute;left:890.5px;top:112.5px;width:75.5px;height:15px;background:#fff;border:1px solid #ebebef;border-radius:3px;box-sizing:border-box"></div>
<svg style="position:absolute;left:894px;top:116.5px;" width="7.5" height="7.5" viewBox="0 0 7.5 7.5"><circle cx="1.8" cy="1.8" r="1.2" fill="#8a6ae8"/><circle cx="5.6" cy="1.8" r="1.2" fill="#e86a9a"/><circle cx="1.8" cy="5.6" r="1.2" fill="#6a8ae8"/><circle cx="5.6" cy="5.6" r="1.2" fill="#e85a7a"/><path d="M1.8 1.8 L5.6 5.6 M5.6 1.8 L1.8 5.6" stroke="#9a7ae0" stroke-width="0.8"/></svg>
<div style="position:absolute;left:903.00px;top:117.00px;font-family:'Liberation Sans';font-size:7.25px;line-height:7.25px;font-weight:400;color:#2e2e36;white-space:pre;letter-spacing:0.009px;-webkit-text-stroke:0.2px #2e2e36;">Chat with Sculptor</div>
<div style="position:absolute;left:970px;top:112.5px;width:42px;height:15.2px;background:#2f7fe8;border-radius:3px"></div>
<div style="position:absolute;left:975.50px;top:117.00px;font-family:'Liberation Sans';font-size:7.30px;line-height:7.30px;font-weight:400;color:#e4eeff;white-space:pre;letter-spacing:0.009px;-webkit-text-stroke:0.2px #e4eeff;">Actions</div>
<svg style="position:absolute;left:1001.5px;top:116.8px;" width="7" height="7" viewBox="0 0 7 7"><path d="M0.8 0.5 V6.5" stroke="#e4eeff" stroke-width="1"/><path d="M6.5 3.5 H2.3 M4 1.8 L2.3 3.5 L4 5.2" fill="none" stroke="#e4eeff" stroke-width="1"/></svg>
<div style="position:absolute;left:141.6px;top:144.5px;width:1px;height:398px;background:#f0f0f4"></div>
<div style="position:absolute;left:237.7px;top:144.5px;width:1px;height:398px;background:#f0f0f4"></div>
<div style="position:absolute;left:333.5px;top:144.5px;width:1px;height:398px;background:#f0f0f4"></div>
<div style="position:absolute;left:429.5px;top:144.5px;width:1px;height:398px;background:#f0f0f4"></div>
<div style="position:absolute;left:525.5px;top:144.5px;width:1px;height:398px;background:#f0f0f4"></div>
<div style="position:absolute;left:621px;top:144.5px;width:1px;height:398px;background:#f0f0f4"></div>
<div style="position:absolute;left:749.8px;top:144.5px;width:1px;height:398px;background:#f0f0f4"></div>
<div style="position:absolute;left:871.5px;top:144.5px;width:1px;height:398px;background:#f0f0f4"></div>
<div style="position:absolute;left:967px;top:144.5px;width:1px;height:398px;background:#f0f0f4"></div>
<div style="position:absolute;left:53.5px;top:144.5px;width:1px;height:398px;background:#e4e5ea"></div>
<div style="position:absolute;left:334.5px;top:145px;width:95px;height:29px;background:#eaf0f9"></div>
<div style="position:absolute;left:6px;top:247.2px;width:47.5px;height:168.0px;background:#edf2fa"></div>
<div style="position:absolute;left:6px;top:144.2px;width:1005px;height:1px;background:#f4f4f7"></div>
<div style="position:absolute;left:6px;top:160.5px;width:48px;height:0;border-top:1px solid #e6e9f0"></div>
<div style="position:absolute;left:54px;top:160.5px;width:280px;height:0;border-top:1px solid #d2e1f5"></div>
<div style="position:absolute;left:334.5px;top:160.5px;width:95px;height:0;border-top:1px solid #bfeccc"></div>
<div style="position:absolute;left:429.5px;top:160.5px;width:191.5px;height:0;border-top:1px solid #d2e1f5"></div>
<div style="position:absolute;left:621px;top:160.5px;width:128.8px;height:0;border-top:1px dotted #b8e8c4"></div>
<div style="position:absolute;left:749.8px;top:160.5px;width:121.7px;height:0;border-top:1px dotted #f4e3a8"></div>
<div style="position:absolute;left:871.5px;top:160.5px;width:95.5px;height:0;border-top:1px solid #e8e8ee"></div>
<div style="position:absolute;left:967px;top:160.5px;width:44px;height:0;border-top:1px dotted #f4e3a8"></div>
<div style="position:absolute;left:6px;top:173.5px;width:1005px;height:1px;background:#f0f0f4"></div>
<div style="position:absolute;left:6px;top:179.5px;width:1005px;height:1px;background:#f0f0f4"></div>
<div style="position:absolute;left:6px;top:179.5px;width:1005px;height:1px;background:#f0f0f4"></div>
<div style="position:absolute;left:6px;top:196.3px;width:1005px;height:1px;background:#f0f0f4"></div>
<div style="position:absolute;left:6px;top:213.1px;width:1005px;height:1px;background:#f0f0f4"></div>
<div style="position:absolute;left:6px;top:229.9px;width:1005px;height:1px;background:#f0f0f4"></div>
<div style="position:absolute;left:6px;top:246.7px;width:1005px;height:1px;background:#f0f0f4"></div>
<div style="position:absolute;left:6px;top:263.5px;width:1005px;height:1px;background:#f0f0f4"></div>
<div style="position:absolute;left:6px;top:280.3px;width:1005px;height:1px;background:#f0f0f4"></div>
<div style="position:absolute;left:6px;top:297.1px;width:1005px;height:1px;background:#f0f0f4"></div>
<div style="position:absolute;left:6px;top:313.9px;width:1005px;height:1px;background:#f0f0f4"></div>
<div style="position:absolute;left:6px;top:330.70000000000005px;width:1005px;height:1px;background:#f0f0f4"></div>
<div style="position:absolute;left:6px;top:347.5px;width:1005px;height:1px;background:#f0f0f4"></div>
<div style="position:absolute;left:6px;top:364.3px;width:1005px;height:1px;background:#f0f0f4"></div>
<div style="position:absolute;left:6px;top:381.1px;width:1005px;height:1px;background:#f0f0f4"></div>
<div style="position:absolute;left:6px;top:397.9px;width:1005px;height:1px;background:#f0f0f4"></div>
<div style="position:absolute;left:6px;top:414.70000000000005px;width:1005px;height:1px;background:#f0f0f4"></div>
<div style="position:absolute;left:6px;top:431.5px;width:1005px;height:1px;background:#f0f0f4"></div>
<div style="position:absolute;left:6px;top:448.3px;width:1005px;height:1px;background:#f0f0f4"></div>
<div style="position:absolute;left:6px;top:465.1px;width:1005px;height:1px;background:#f0f0f4"></div>
<div style="position:absolute;left:6px;top:481.90000000000003px;width:1005px;height:1px;background:#f0f0f4"></div>
<div style="position:absolute;left:6px;top:498.7px;width:1005px;height:1px;background:#f0f0f4"></div>
<div style="position:absolute;left:6px;top:515.5px;width:1005px;height:1px;background:#f0f0f4"></div>
<div style="position:absolute;left:6px;top:532.3px;width:1005px;height:1px;background:#f0f0f4"></div>
<div style="position:absolute;left:6px;top:542.7px;width:1011px;height:1px;background:#e6e7ec"></div>
<div style="position:absolute;left:14px;top:150.2px;width:7.5px;height:7.5px;border:1px solid #d8d9de;border-radius:2px;box-sizing:border-box;background:#fff"></div>
<div style="position:absolute;left:14.00px;top:165.00px;font-family:'Liberation Sans';font-size:6.00px;line-height:6.00px;font-weight:400;color:#8a8a92;white-space:pre;">%</div>
<div style="position:absolute;left:54px;top:145px;width:87px;height:16px;overflow:hidden">
<svg style="position:absolute;left:-4.5px;top:5px;" width="8" height="8" viewBox="0 0 8 8"><path d="M0.5 1.5 H5 M0.5 3.5 H5 M0.5 5.5 H3.5" fill="none" stroke="#55555d" stroke-width="0.8"/><path d="M4.5 6.5 H7.3 M6.3 5.3 L7.5 6.5 L6.3 7.7" fill="none" stroke="#55555d" stroke-width="0.8"/></svg>
</div>
<svg style="position:absolute;left:61px;top:150px;" width="6" height="6.5" viewBox="0 0 6 6.5"><path d="M0.6 0.8 H5.4 M3 0.8 V6" stroke="#55555d" stroke-width="1"/></svg>
<div style="position:absolute;left:70.90px;top:150.00px;font-family:'Liberation Sans';font-size:7.30px;line-height:7.30px;font-weight:400;color:#2c2c34;white-space:pre;letter-spacing:0.003px;-webkit-text-stroke:0.2px #2c2c34;">Industry Label</div>
<svg style="position:absolute;left:146.3px;top:149.3px;" width="7.5" height="8" viewBox="0 0 7.5 8"><circle cx="3.6" cy="4" r="3.5" fill="#4aa6e6"/><path d="M3.2 7.4 Q2.4 4.2 4.5 1.2 Q7.3 2.4 7.3 4.6 Q7 7.2 4.6 7.6 Z" fill="#f07a2a"/><circle cx="5.2" cy="4.4" r="1.3" fill="#f8c040"/></svg>
<div style="position:absolute;left:156px;top:145px;width:67px;height:16px;overflow:hidden">
<div style="position:absolute;left:0.60px;top:5.00px;font-family:'Liberation Sans';font-size:7.20px;line-height:7.20px;font-weight:400;color:#2c2c34;white-space:pre;-webkit-text-stroke:0.2px #2c2c34;">Distribute Leads Round Robin</div>
<div style="position:absolute;left:50px;top:0;width:17px;height:16px;background:linear-gradient(90deg,rgba(255,255,255,0),#fff)"></div></div>
<div style="position:absolute;left:222.6px;top:148.5px;width:11.5px;height:10px;background:#fff;border-left:1px solid #efeff3;box-sizing:border-box"></div>
<svg style="position:absolute;left:226.1px;top:150.8px;" width="5" height="5.5" viewBox="0 0 5 5.5"><path d="M0.6 0.6 L4.3 2.75 L0.6 4.9 Z" fill="none" stroke="#55555d" stroke-width="0.9"/></svg>
<svg style="position:absolute;left:242.5px;top:150px;" width="8" height="8" viewBox="0 0 8 8"><path d="M0.5 1.5 H5 M0.5 3.5 H5 M0.5 5.5 H3.5" fill="none" stroke="#55555d" stroke-width="0.8"/><path d="M4.5 6.5 H7.3 M6.3 5.3 L7.5 6.5 L6.3 7.7" fill="none" stroke="#55555d" stroke-width="0.8"/></svg>
<svg style="position:absolute;left:252.5px;top:149.8px;" width="7" height="7" viewBox="0 0 7 7"><circle cx="3.5" cy="3.5" r="2.9" fill="none" stroke="#55555d" stroke-width="0.9"/><path d="M2.1 3.6 L3.1 4.6 L5 2.5" fill="none" stroke="#55555d" stroke-width="0.85"/></svg>
<div style="position:absolute;left:262.30px;top:150.00px;font-family:'Liberation Sans';font-size:7.35px;line-height:7.35px;font-weight:400;color:#2c2c34;white-space:pre;letter-spacing:-0.004px;-webkit-text-stroke:0.2px #2c2c34;">Lead Owner</div>
<svg style="position:absolute;left:323.5px;top:149.8px;" width="7" height="7" viewBox="0 0 7 7"><circle cx="3.5" cy="3.5" r="2.9" fill="none" stroke="#55555d" stroke-width="0.85"/><path d="M3.5 3 V5.2" stroke="#55555d" stroke-width="0.8"/><circle cx="3.5" cy="1.9" r="0.45" fill="#55555d"/></svg>
<svg style="position:absolute;left:338.5px;top:149.8px;" width="7" height="7" viewBox="0 0 7 7"><circle cx="3.5" cy="3.5" r="2.9" fill="none" stroke="#55555d" stroke-width="0.9"/><path d="M2.1 3.6 L3.1 4.6 L5 2.5" fill="none" stroke="#55555d" stroke-width="0.85"/></svg>
<div style="position:absolute;left:348.40px;top:151.00px;font-family:'Liberation Sans';font-size:7.15px;line-height:7.15px;font-weight:400;color:#2c2c34;white-space:pre;letter-spacing:0.009px;-webkit-text-stroke:0.2px #2c2c34;">Enrich Contact?</div>
<svg style="position:absolute;left:418.8px;top:149.8px;" width="7" height="7" viewBox="0 0 7 7"><circle cx="3.5" cy="3.5" r="2.9" fill="none" stroke="#55555d" stroke-width="0.85"/><path d="M3.5 3 V5.2" stroke="#55555d" stroke-width="0.8"/><circle cx="3.5" cy="1.9" r="0.45" fill="#55555d"/></svg>
<svg style="position:absolute;left:435.8px;top:149.8px;" width="6" height="7" viewBox="0 0 6 7"><path d="M1 0.8 V2.5 Q1 4 3 4.2 Q5 4 5 2.5 V0.8 M3 4.2 V6.5" fill="none" stroke="#55555d" stroke-width="0.95"/></svg>
<svg style="position:absolute;left:444.8px;top:149.8px;" width="7" height="7" viewBox="0 0 7 7"><circle cx="3.5" cy="3.5" r="1.3" fill="none" stroke="#55555d" stroke-width="0.85"/><path d="M4.8 2.2 V4 Q4.8 5 5.6 5 Q6.4 4.8 6.4 3.5 A2.9 2.9 0 1 0 5 6" fill="none" stroke="#55555d" stroke-width="0.85"/></svg>
<div style="position:absolute;left:455px;top:145px;width:56px;height:16px;overflow:hidden">
<div style="position:absolute;left:0.40px;top:5.00px;font-family:'Liberation Sans';font-size:7.20px;line-height:7.20px;font-weight:400;color:#2c2c34;white-space:pre;-webkit-text-stroke:0.2px #2c2c34;">Work Email (Enterprise)</div>
<div style="position:absolute;left:36px;top:0;width:20px;height:16px;background:linear-gradient(90deg,rgba(255,255,255,0),#fff 90%)"></div></div>
<div style="position:absolute;left:511px;top:148.5px;width:11.5px;height:10px;background:#fff;border-left:1px solid #efeff3;box-sizing:border-box"></div>
<svg style="position:absolute;left:514.5px;top:150.8px;" width="5" height="5.5" viewBox="0 0 5 5.5"><path d="M0.6 0.6 L4.3 2.75 L0.6 4.9 Z" fill="none" stroke="#55555d" stroke-width="0.9"/></svg>
<svg style="position:absolute;left:531.5px;top:149.8px;" width="6" height="7" viewBox="0 0 6 7"><path d="M1 0.8 V2.5 Q1 4 3 4.2 Q5 4 5 2.5 V0.8 M3 4.2 V6.5" fill="none" stroke="#55555d" stroke-width="0.95"/></svg>
<svg style="position:absolute;left:541.3px;top:150px;" width="6" height="6.5" viewBox="0 0 6 6.5"><path d="M0.6 0.8 H5.4 M3 0.8 V6" stroke="#55555d" stroke-width="1"/></svg>
<div style="position:absolute;left:551px;top:145px;width:56px;height:16px;overflow:hidden">
<div style="position:absolute;left:0.00px;top:5.00px;font-family:'Liberation Sans';font-size:7.20px;line-height:7.20px;font-weight:400;color:#2c2c34;white-space:pre;-webkit-text-stroke:0.2px #2c2c34;">Mobile Phone (US and Canada)</div>
<div style="position:absolute;left:40px;top:0;width:16px;height:16px;background:linear-gradient(90deg,rgba(255,255,255,0),#fff 90%)"></div></div>
<div style="position:absolute;left:606.8px;top:148.5px;width:11.5px;height:10px;background:#fff;border-left:1px solid #efeff3;box-sizing:border-box"></div>
<svg style="position:absolute;left:610.3px;top:150.8px;" width="5" height="5.5" viewBox="0 0 5 5.5"><path d="M0.6 0.6 L4.3 2.75 L0.6 4.9 Z" fill="none" stroke="#55555d" stroke-width="0.9"/></svg>
<svg style="position:absolute;left:626.3px;top:149.8px;" width="7" height="7" viewBox="0 0 7 7"><circle cx="3.5" cy="3.5" r="2.9" fill="none" stroke="#55555d" stroke-width="0.9"/><path d="M2.1 3.6 L3.1 4.6 L5 2.5" fill="none" stroke="#55555d" stroke-width="0.85"/></svg>
<div style="position:absolute;left:636.50px;top:150.00px;font-family:'Liberation Sans';font-size:7.00px;line-height:7.00px;font-weight:400;color:#2c2c34;white-space:pre;letter-spacing:0.002px;-webkit-text-stroke:0.2px #2c2c34;">Send Email Sequence?</div>
<svg style="position:absolute;left:738.5px;top:149.8px;" width="7" height="7" viewBox="0 0 7 7"><circle cx="3.5" cy="3.5" r="2.9" fill="none" stroke="#55555d" stroke-width="0.85"/><path d="M3.5 3 V5.2" stroke="#55555d" stroke-width="0.8"/><circle cx="3.5" cy="1.9" r="0.45" fill="#55555d"/></svg>
<svg style="position:absolute;left:754.5px;top:150px;" width="6.5" height="6.5" viewBox="0 0 6.5 6.5"><path d="M0.5 2.5 Q0.5 0.5 3 0.5 H5.8 V3.3 H2.8 Q1 3.3 1 5.5 H0.5 Z" fill="#3a70c0"/><path d="M6 4 Q6 6 3.5 6 H0.7 V3.3 H3.7 Q5.5 3.3 5.5 1 H6 Z" fill="#f5c030"/></svg>
<div style="position:absolute;left:764.30px;top:151.00px;font-family:'Liberation Sans';font-size:7.10px;line-height:7.10px;font-weight:400;color:#2c2c34;white-space:pre;letter-spacing:0.006px;-webkit-text-stroke:0.2px #2c2c34;">Create Contact (Paul)</div>
<div style="position:absolute;left:856.5px;top:148.5px;width:11.5px;height:10px;background:#fff;border-left:1px solid #efeff3;box-sizing:border-box"></div>
<svg style="position:absolute;left:860.0px;top:150.8px;" width="5" height="5.5" viewBox="0 0 5 5.5"><path d="M0.6 0.6 L4.3 2.75 L0.6 4.9 Z" fill="none" stroke="#55555d" stroke-width="0.9"/></svg>
<svg style="position:absolute;left:875.8px;top:150px;" width="8" height="8" viewBox="0 0 8 8"><path d="M0.5 1.5 H5 M0.5 3.5 H5 M0.5 5.5 H3.5" fill="none" stroke="#55555d" stroke-width="0.8"/><path d="M4.5 6.5 H7.3 M6.3 5.3 L7.5 6.5 L6.3 7.7" fill="none" stroke="#55555d" stroke-width="0.8"/></svg>
<svg style="position:absolute;left:886.5px;top:150px;" width="7" height="7" viewBox="0 0 7 7"><path d="M2.5 0.5 L1.8 6.5 M5 0.5 L4.3 6.5 M0.6 2.3 H6.5 M0.4 4.6 H6.3" stroke="#55555d" stroke-width="0.85"/></svg>
<div style="position:absolute;left:896.80px;top:150.00px;font-family:'Liberation Sans';font-size:7.80px;line-height:7.80px;font-weight:400;color:#2c2c34;white-space:pre;letter-spacing:-0.003px;-webkit-text-stroke:0.2px #2c2c34;">Id</div>
<svg style="position:absolute;left:972px;top:150px;" width="6.5" height="6.5" viewBox="0 0 6.5 6.5"><path d="M0.5 2.5 Q0.5 0.5 3 0.5 H5.8 V3.3 H2.8 Q1 3.3 1 5.5 H0.5 Z" fill="#3a70c0"/><path d="M6 4 Q6 6 3.5 6 H0.7 V3.3 H3.7 Q5.5 3.3 5.5 1 H6 Z" fill="#f5c030"/></svg>
<div style="position:absolute;left:981.3px;top:145px;width:31px;height:16px;overflow:hidden">
<div style="position:absolute;left:0.00px;top:6.00px;font-family:'Liberation Sans';font-size:6.90px;line-height:6.90px;font-weight:400;color:#2c2c34;white-space:pre;letter-spacing:-0.010px;-webkit-text-stroke:0.2px #2c2c34;">Create Contact (Chris)</div>
</div>
<div style="position:absolute;left:430.3px;top:133.5px;width:89.69999999999999px;height:11px;background:#fff;border:1px solid #e2e2e8;border-radius:2px;box-sizing:border-box"></div>
<div style="position:absolute;left:508.5px;top:133.5px;width:1px;height:11px;background:#e2e2e8"></div>
<svg style="position:absolute;left:434.3px;top:136px;" width="6" height="6" viewBox="0 0 6 6"><path d="M0.5 0.8 H3.5 Q5 0.8 5 2.3 V5 M3.8 3.8 L5 5.2 L6 3.8" fill="none" stroke="#77777f" stroke-width="0.8"/></svg>
<svg style="position:absolute;left:511px;top:136.5px;" width="6" height="5" viewBox="0 0 6 5"><path d="M0.6 0.5 L2.6 2.5 L0.6 4.5 M3.2 0.5 L5.2 2.5 L3.2 4.5" fill="none" stroke="#8a8a92" stroke-width="0.8"/></svg>
<div style="position:absolute;left:442.60px;top:136.00px;font-family:'Liberation Sans';font-size:6.00px;line-height:6.00px;font-weight:400;color:#6a6a72;white-space:pre;letter-spacing:-0.007px;">Work Email (Enterprise)</div>
<div style="position:absolute;left:526.3px;top:133.5px;width:94.70000000000005px;height:11px;background:#fff;border:1px solid #e2e2e8;border-radius:2px;box-sizing:border-box"></div>
<div style="position:absolute;left:609.5px;top:133.5px;width:1px;height:11px;background:#e2e2e8"></div>
<svg style="position:absolute;left:530.3px;top:136px;" width="6" height="6" viewBox="0 0 6 6"><path d="M0.5 0.8 H3.5 Q5 0.8 5 2.3 V5 M3.8 3.8 L5 5.2 L6 3.8" fill="none" stroke="#77777f" stroke-width="0.8"/></svg>
<svg style="position:absolute;left:612px;top:136.5px;" width="6" height="5" viewBox="0 0 6 5"><path d="M0.6 0.5 L2.6 2.5 L0.6 4.5 M3.2 0.5 L5.2 2.5 L3.2 4.5" fill="none" stroke="#8a8a92" stroke-width="0.8"/></svg>
<div style="position:absolute;left:542.40px;top:136.00px;font-family:'Liberation Sans';font-size:6.00px;line-height:6.00px;font-weight:400;color:#6a6a72;white-space:pre;letter-spacing:-0.008px;">Mobile Phone (US and</div>
<svg style="position:absolute;left:52.5px;top:164.7px;" width="7" height="5.5" viewBox="0 0 7 5.5"><path d="M0.6 2.8 L2.5 4.6 L6.2 0.8" fill="none" stroke="#3aaa6a" stroke-width="1"/></svg>
<div style="position:absolute;left:54px;top:160px;width:0.5px;height:15px;background:#e4e5ea"></div>
<svg style="position:absolute;left:147px;top:164.7px;" width="7" height="5.5" viewBox="0 0 7 5.5"><path d="M0.6 2.8 L2.5 4.6 L6.2 0.8" fill="none" stroke="#3aaa6a" stroke-width="1"/></svg>
<div style="position:absolute;left:156.80px;top:166.00px;font-family:'Liberation Sans';font-size:5.50px;line-height:5.50px;font-weight:400;color:#8a8a92;white-space:pre;letter-spacing:0.008px;">100%</div>
<svg style="position:absolute;left:242.5px;top:164.7px;" width="7" height="5.5" viewBox="0 0 7 5.5"><path d="M0.6 2.8 L2.5 4.6 L6.2 0.8" fill="none" stroke="#3aaa6a" stroke-width="1"/></svg>
<div style="position:absolute;left:338.5px;top:166.7px;width:37.5px;height:3px;background:#1f9c5e;border-radius:1.5px"></div>
<div style="position:absolute;left:338.5px;top:166.7px;width:2.5px;height:3px;background:#b8505e;border-radius:1.5px 0 0 1.5px"></div>
<div style="position:absolute;left:379.50px;top:166.00px;font-family:'Liberation Sans';font-size:5.75px;line-height:5.75px;font-weight:400;color:#8a8a92;white-space:pre;letter-spacing:-0.002px;">100%</div>
<div style="position:absolute;left:434.6px;top:166.7px;width:37px;height:3px;background:#1f9c5e;border-radius:1.5px"></div>
<div style="position:absolute;left:434.6px;top:166.7px;width:2.5px;height:3px;background:#b8505e;border-radius:1.5px 0 0 1.5px"></div>
<div style="position:absolute;left:475.40px;top:166.00px;font-family:'Liberation Sans';font-size:5.65px;line-height:5.65px;font-weight:400;color:#8a8a92;white-space:pre;letter-spacing:-0.013px;">100%</div>
<svg style="position:absolute;left:531.3px;top:164.7px;" width="7" height="5.5" viewBox="0 0 7 5.5"><path d="M0.6 2.8 L2.5 4.6 L6.2 0.8" fill="none" stroke="#3aaa6a" stroke-width="1"/></svg>
<div style="position:absolute;left:540.70px;top:166.00px;font-family:'Liberation Sans';font-size:5.60px;line-height:5.60px;font-weight:400;color:#8a8a92;white-space:pre;letter-spacing:-0.006px;">100%</div>
<svg style="position:absolute;left:738px;top:164.5px;" width="7" height="6" viewBox="0 0 7 6"><rect x="0.3" y="0.3" width="6.4" height="5.4" rx="0.8" fill="#d8d8de"/><path d="M1.3 2 H5.7 M1.3 3.8 H5.7" stroke="#fff" stroke-width="0.7"/></svg>
<div style="position:absolute;left:754px;top:166.7px;width:37.8px;height:3px;background:#1f9c5e;border-radius:1.5px"></div>
<div style="position:absolute;left:794.70px;top:166.00px;font-family:'Liberation Sans';font-size:5.90px;line-height:5.90px;font-weight:400;color:#8a8a92;white-space:pre;letter-spacing:0.011px;">&gt;99%</div>
<svg style="position:absolute;left:876px;top:164.7px;" width="7" height="5.5" viewBox="0 0 7 5.5"><path d="M0.6 2.8 L2.5 4.6 L6.2 0.8" fill="none" stroke="#3aaa6a" stroke-width="1"/></svg>
<div style="position:absolute;left:972px;top:166.7px;width:36.9px;height:3px;background:#1f9c5e;border-radius:1.5px"></div>
<div style="position:absolute;left:334.5px;top:247.2px;width:94.5px;height:168.0px;background:#f3f6fb"></div>
<div style="position:absolute;left:334.5px;top:247.2px;width:94.5px;height:16.8px;background:#f1f5fb"></div>
<div style="position:absolute;left:14.80px;top:186.00px;font-family:'Liberation Sans';font-size:6.30px;line-height:6.30px;font-weight:400;color:#8e8e96;white-space:pre;">9</div>
<div style="position:absolute;left:54.5px;top:180.0px;width:86px;height:16px;overflow:hidden">
<div style="position:absolute;left:-5.20px;top:6.00px;font-family:'Liberation Sans';font-size:7.15px;line-height:7.15px;font-weight:400;color:#2c2c34;white-space:pre;">media</div>
</div>
<svg style="position:absolute;left:146.3px;top:184.9px;" width="7.5" height="8" viewBox="0 0 7.5 8"><circle cx="3.6" cy="4" r="3.5" fill="#4aa6e6"/><path d="M3.2 7.4 Q2.4 4.2 4.5 1.2 Q7.3 2.4 7.3 4.6 Q7 7.2 4.6 7.6 Z" fill="#f07a2a"/><circle cx="5.2" cy="4.4" r="1.3" fill="#f8c040"/></svg>
<div style="position:absolute;left:155.60px;top:186.00px;font-family:'Liberation Sans';font-size:7.15px;line-height:7.15px;font-weight:400;color:#2c2c34;white-space:pre;">Paul</div>
<div style="position:absolute;left:242.2px;top:184.3px;width:17.1px;height:8.6px;background:#fbeac0;border-radius:2px"></div>
<div style="position:absolute;left:244.70px;top:187.00px;font-family:'Liberation Sans';font-size:6.30px;line-height:6.30px;font-weight:400;color:#3a3224;white-space:pre;letter-spacing:-0.277px;-webkit-text-stroke:0.12px #3a3224;">Paul</div>
<div style="position:absolute;left:337.9px;top:184.0px;width:15.2px;height:8.2px;background:#c9f0d9;border-radius:2px"></div>
<div style="position:absolute;left:340.00px;top:186.00px;font-family:'Liberation Sans';font-size:6.30px;line-height:6.30px;font-weight:400;color:#24402e;white-space:pre;letter-spacing:0.241px;-webkit-text-stroke:0.12px #24402e;">Yes</div>
<div style="position:absolute;left:433.80px;top:186.00px;font-family:'Liberation Sans';font-size:7.15px;line-height:7.15px;font-weight:400;color:#3a3a42;white-space:pre;">ggallardo@prisaradio.com</div>
<div style="position:absolute;left:530.00px;top:186.00px;font-family:'Liberation Sans';font-size:7.15px;line-height:7.15px;font-weight:400;color:#3a3a42;white-space:pre;">+17862527568</div>
<div style="position:absolute;left:754.00px;top:186.00px;font-family:'Liberation Sans';font-size:7.15px;line-height:7.15px;font-weight:400;color:#8e8e96;white-space:pre;letter-spacing:-0.007px;">Run condition not met</div>
<div style="position:absolute;left:970px;top:180.0px;width:42px;height:16px;overflow:hidden">
<div style="position:absolute;left:1.50px;top:6.00px;font-family:'Liberation Sans';font-size:7.15px;line-height:7.15px;font-weight:400;color:#8e8e96;white-space:pre;letter-spacing:-0.007px;">Run condition not met</div>
</div>
<div style="position:absolute;left:14.60px;top:203.00px;font-family:'Liberation Sans';font-size:6.30px;line-height:6.30px;font-weight:400;color:#8e8e96;white-space:pre;">10</div>
<div style="position:absolute;left:54.5px;top:196.8px;width:86px;height:16px;overflow:hidden">
<div style="position:absolute;left:-4.00px;top:6.00px;font-family:'Liberation Sans';font-size:7.15px;line-height:7.15px;font-weight:400;color:#2c2c34;white-space:pre;">healthcare</div>
</div>
<svg style="position:absolute;left:146.3px;top:201.70000000000002px;" width="7.5" height="8" viewBox="0 0 7.5 8"><circle cx="3.6" cy="4" r="3.5" fill="#4aa6e6"/><path d="M3.2 7.4 Q2.4 4.2 4.5 1.2 Q7.3 2.4 7.3 4.6 Q7 7.2 4.6 7.6 Z" fill="#f07a2a"/><circle cx="5.2" cy="4.4" r="1.3" fill="#f8c040"/></svg>
<div style="position:absolute;left:155.60px;top:203.00px;font-family:'Liberation Sans';font-size:7.15px;line-height:7.15px;font-weight:400;color:#2c2c34;white-space:pre;">Paul</div>
<div style="position:absolute;left:242.2px;top:201.10000000000002px;width:17.1px;height:8.6px;background:#fbeac0;border-radius:2px"></div>
<div style="position:absolute;left:244.70px;top:203.00px;font-family:'Liberation Sans';font-size:6.30px;line-height:6.30px;font-weight:400;color:#3a3224;white-space:pre;letter-spacing:-0.277px;-webkit-text-stroke:0.12px #3a3224;">Paul</div>
<div style="position:absolute;left:337.9px;top:200.8px;width:15.2px;height:8.2px;background:#c9f0d9;border-radius:2px"></div>
<div style="position:absolute;left:340.00px;top:203.00px;font-family:'Liberation Sans';font-size:6.30px;line-height:6.30px;font-weight:400;color:#24402e;white-space:pre;letter-spacing:0.241px;-webkit-text-stroke:0.12px #24402e;">Yes</div>
<div style="position:absolute;left:433.80px;top:203.00px;font-family:'Liberation Sans';font-size:7.15px;line-height:7.15px;font-weight:400;color:#3a3a42;white-space:pre;">daslel.fragoso@opuscare...</div>
<div style="position:absolute;left:530.00px;top:203.00px;font-family:'Liberation Sans';font-size:7.15px;line-height:7.15px;font-weight:400;color:#3a3a42;white-space:pre;">+13058124546</div>
<div style="position:absolute;left:754.00px;top:203.00px;font-family:'Liberation Sans';font-size:7.15px;line-height:7.15px;font-weight:400;color:#8e8e96;white-space:pre;letter-spacing:-0.007px;">Run condition not met</div>
<div style="position:absolute;left:970px;top:196.8px;width:42px;height:16px;overflow:hidden">
<div style="position:absolute;left:1.50px;top:6.00px;font-family:'Liberation Sans';font-size:7.15px;line-height:7.15px;font-weight:400;color:#8e8e96;white-space:pre;letter-spacing:-0.007px;">Run condition not met</div>
</div>
<div style="position:absolute;left:14.60px;top:220.00px;font-family:'Liberation Sans';font-size:6.30px;line-height:6.30px;font-weight:400;color:#8e8e96;white-space:pre;">11</div>
<svg style="position:absolute;left:146.3px;top:218.5px;" width="7.5" height="8" viewBox="0 0 7.5 8"><circle cx="3.6" cy="4" r="3.5" fill="#4aa6e6"/><path d="M3.2 7.4 Q2.4 4.2 4.5 1.2 Q7.3 2.4 7.3 4.6 Q7 7.2 4.6 7.6 Z" fill="#f07a2a"/><circle cx="5.2" cy="4.4" r="1.3" fill="#f8c040"/></svg>
<div style="position:absolute;left:155.60px;top:220.00px;font-family:'Liberation Sans';font-size:7.15px;line-height:7.15px;font-weight:400;color:#2c2c34;white-space:pre;">Paul</div>
<div style="position:absolute;left:242.2px;top:217.9px;width:17.1px;height:8.6px;background:#fbeac0;border-radius:2px"></div>
<div style="position:absolute;left:244.70px;top:220.00px;font-family:'Liberation Sans';font-size:6.30px;line-height:6.30px;font-weight:400;color:#3a3224;white-space:pre;letter-spacing:-0.277px;-webkit-text-stroke:0.12px #3a3224;">Paul</div>
<div style="position:absolute;left:337.9px;top:217.6px;width:15.2px;height:8.2px;background:#c9f0d9;border-radius:2px"></div>
<div style="position:absolute;left:340.00px;top:220.00px;font-family:'Liberation Sans';font-size:6.30px;line-height:6.30px;font-weight:400;color:#24402e;white-space:pre;letter-spacing:0.241px;-webkit-text-stroke:0.12px #24402e;">Yes</div>
<div style="position:absolute;left:530.00px;top:220.00px;font-family:'Liberation Sans';font-size:7.15px;line-height:7.15px;font-weight:400;color:#3a3a42;white-space:pre;">(954) 243-6783</div>
<div style="position:absolute;left:754.00px;top:220.00px;font-family:'Liberation Sans';font-size:7.15px;line-height:7.15px;font-weight:400;color:#8e8e96;white-space:pre;letter-spacing:-0.007px;">Run condition not met</div>
<div style="position:absolute;left:970px;top:213.6px;width:42px;height:16px;overflow:hidden">
<div style="position:absolute;left:1.50px;top:6.00px;font-family:'Liberation Sans';font-size:7.15px;line-height:7.15px;font-weight:400;color:#8e8e96;white-space:pre;letter-spacing:-0.007px;">Run condition not met</div>
</div>
<div style="position:absolute;left:14.60px;top:237.00px;font-family:'Liberation Sans';font-size:6.30px;line-height:6.30px;font-weight:400;color:#8e8e96;white-space:pre;">12</div>
<div style="position:absolute;left:54.5px;top:230.4px;width:86px;height:16px;overflow:hidden">
<div style="position:absolute;left:-4.60px;top:6.00px;font-family:'Liberation Sans';font-size:7.15px;line-height:7.15px;font-weight:400;color:#2c2c34;white-space:pre;">retail</div>
</div>
<svg style="position:absolute;left:146.3px;top:235.3px;" width="7.5" height="8" viewBox="0 0 7.5 8"><circle cx="3.6" cy="4" r="3.5" fill="#4aa6e6"/><path d="M3.2 7.4 Q2.4 4.2 4.5 1.2 Q7.3 2.4 7.3 4.6 Q7 7.2 4.6 7.6 Z" fill="#f07a2a"/><circle cx="5.2" cy="4.4" r="1.3" fill="#f8c040"/></svg>
<div style="position:absolute;left:155.60px;top:237.00px;font-family:'Liberation Sans';font-size:7.15px;line-height:7.15px;font-weight:400;color:#2c2c34;white-space:pre;">Paul</div>
<div style="position:absolute;left:242.2px;top:234.70000000000002px;width:17.1px;height:8.6px;background:#fbeac0;border-radius:2px"></div>
<div style="position:absolute;left:244.70px;top:237.00px;font-family:'Liberation Sans';font-size:6.30px;line-height:6.30px;font-weight:400;color:#3a3224;white-space:pre;letter-spacing:-0.277px;-webkit-text-stroke:0.12px #3a3224;">Paul</div>
<div style="position:absolute;left:337.9px;top:234.4px;width:15.2px;height:8.2px;background:#c9f0d9;border-radius:2px"></div>
<div style="position:absolute;left:340.00px;top:237.00px;font-family:'Liberation Sans';font-size:6.30px;line-height:6.30px;font-weight:400;color:#24402e;white-space:pre;letter-spacing:0.241px;-webkit-text-stroke:0.12px #24402e;">Yes</div>
<div style="position:absolute;left:433.80px;top:237.00px;font-family:'Liberation Sans';font-size:7.15px;line-height:7.15px;font-weight:400;color:#3a3a42;white-space:pre;">bparker@trendsinternatio...</div>
<div style="position:absolute;left:530.00px;top:237.00px;font-family:'Liberation Sans';font-size:7.15px;line-height:7.15px;font-weight:400;color:#3a3a42;white-space:pre;">(480) 465-6207</div>
<div style="position:absolute;left:754.00px;top:237.00px;font-family:'Liberation Sans';font-size:7.15px;line-height:7.15px;font-weight:400;color:#8e8e96;white-space:pre;letter-spacing:-0.007px;">Run condition not met</div>
<div style="position:absolute;left:970px;top:230.4px;width:42px;height:16px;overflow:hidden">
<div style="position:absolute;left:1.50px;top:6.00px;font-family:'Liberation Sans';font-size:7.15px;line-height:7.15px;font-weight:400;color:#8e8e96;white-space:pre;letter-spacing:-0.007px;">Run condition not met</div>
</div>
<div style="position:absolute;left:14.60px;top:254.00px;font-family:'Liberation Sans';font-size:6.30px;line-height:6.30px;font-weight:400;color:#8e8e96;white-space:pre;">13</div>
<div style="position:absolute;left:54.5px;top:247.2px;width:86px;height:16px;overflow:hidden">
<div style="position:absolute;left:-4.60px;top:6.00px;font-family:'Liberation Sans';font-size:7.15px;line-height:7.15px;font-weight:400;color:#2c2c34;white-space:pre;">property</div>
</div>
<svg style="position:absolute;left:146.3px;top:252.1px;" width="7.5" height="8" viewBox="0 0 7.5 8"><circle cx="3.6" cy="4" r="3.5" fill="#4aa6e6"/><path d="M3.2 7.4 Q2.4 4.2 4.5 1.2 Q7.3 2.4 7.3 4.6 Q7 7.2 4.6 7.6 Z" fill="#f07a2a"/><circle cx="5.2" cy="4.4" r="1.3" fill="#f8c040"/></svg>
<div style="position:absolute;left:155.60px;top:254.00px;font-family:'Liberation Sans';font-size:7.15px;line-height:7.15px;font-weight:400;color:#2c2c34;white-space:pre;">Paul</div>
<div style="position:absolute;left:242.2px;top:251.5px;width:17.1px;height:8.6px;background:#fbeac0;border-radius:2px"></div>
<div style="position:absolute;left:244.70px;top:254.00px;font-family:'Liberation Sans';font-size:6.30px;line-height:6.30px;font-weight:400;color:#3a3224;white-space:pre;letter-spacing:-0.277px;-webkit-text-stroke:0.12px #3a3224;">Paul</div>
<div style="position:absolute;left:337.80px;top:252.00px;font-family:'Liberation Sans';font-size:7.20px;line-height:7.20px;font-weight:400;color:#3c3c44;white-space:pre;">[object Object]</div>
<svg style="position:absolute;left:419.2px;top:252.39999999999998px;" width="7" height="6.5" viewBox="0 0 7 6.5"><path d="M3.5 0.7 L6.5 5.9 H0.5 Z" fill="none" stroke="#d4bcb4" stroke-width="0.8" stroke-linejoin="round"/><path d="M3.5 2.4 V4" stroke="#d4bcb4" stroke-width="0.7"/><circle cx="3.5" cy="4.9" r="0.35" fill="#d4bcb4"/></svg>
<div style="position:absolute;left:754.00px;top:254.00px;font-family:'Liberation Sans';font-size:7.15px;line-height:7.15px;font-weight:400;color:#8e8e96;white-space:pre;letter-spacing:-0.007px;">Run condition not met</div>
<div style="position:absolute;left:970px;top:247.2px;width:42px;height:16px;overflow:hidden">
<div style="position:absolute;left:1.50px;top:6.00px;font-family:'Liberation Sans';font-size:7.15px;line-height:7.15px;font-weight:400;color:#8e8e96;white-space:pre;letter-spacing:-0.007px;">Run condition not met</div>
</div>
<div style="position:absolute;left:14.60px;top:270.00px;font-family:'Liberation Sans';font-size:6.30px;line-height:6.30px;font-weight:400;color:#8e8e96;white-space:pre;">14</div>
<div style="position:absolute;left:54.5px;top:264.0px;width:86px;height:16px;overflow:hidden">
<div style="position:absolute;left:-4.60px;top:6.00px;font-family:'Liberation Sans';font-size:7.15px;line-height:7.15px;font-weight:400;color:#2c2c34;white-space:pre;">food</div>
</div>
<svg style="position:absolute;left:146.3px;top:268.9px;" width="7.5" height="8" viewBox="0 0 7.5 8"><circle cx="3.6" cy="4" r="3.5" fill="#4aa6e6"/><path d="M3.2 7.4 Q2.4 4.2 4.5 1.2 Q7.3 2.4 7.3 4.6 Q7 7.2 4.6 7.6 Z" fill="#f07a2a"/><circle cx="5.2" cy="4.4" r="1.3" fill="#f8c040"/></svg>
<div style="position:absolute;left:155.60px;top:270.00px;font-family:'Liberation Sans';font-size:7.15px;line-height:7.15px;font-weight:400;color:#2c2c34;white-space:pre;">Chris</div>
<div style="position:absolute;left:242.2px;top:268.3px;width:19px;height:8.4px;background:#eaf0f8;border-radius:2px"></div>
<div style="position:absolute;left:245.00px;top:270.00px;font-family:'Liberation Sans';font-size:6.30px;line-height:6.30px;font-weight:400;color:#3c4652;white-space:pre;letter-spacing:-0.200px;-webkit-text-stroke:0.12px #3c4652;">Chris</div>
<div style="position:absolute;left:337.80px;top:269.00px;font-family:'Liberation Sans';font-size:7.20px;line-height:7.20px;font-weight:400;color:#3c3c44;white-space:pre;">[object Object]</div>
<svg style="position:absolute;left:419.2px;top:269.2px;" width="7" height="6.5" viewBox="0 0 7 6.5"><path d="M3.5 0.7 L6.5 5.9 H0.5 Z" fill="none" stroke="#d4bcb4" stroke-width="0.8" stroke-linejoin="round"/><path d="M3.5 2.4 V4" stroke="#d4bcb4" stroke-width="0.7"/><circle cx="3.5" cy="4.9" r="0.35" fill="#d4bcb4"/></svg>
<div style="position:absolute;left:754.00px;top:270.00px;font-family:'Liberation Sans';font-size:7.15px;line-height:7.15px;font-weight:400;color:#8e8e96;white-space:pre;letter-spacing:-0.007px;">Run condition not met</div>
<div style="position:absolute;left:970px;top:264.0px;width:42px;height:16px;overflow:hidden">
<div style="position:absolute;left:1.50px;top:6.00px;font-family:'Liberation Sans';font-size:7.15px;line-height:7.15px;font-weight:400;color:#8e8e96;white-space:pre;letter-spacing:-0.007px;">Run condition not met</div>
</div>
<div style="position:absolute;left:14.60px;top:287.00px;font-family:'Liberation Sans';font-size:6.30px;line-height:6.30px;font-weight:400;color:#8e8e96;white-space:pre;">15</div>
<div style="position:absolute;left:54.5px;top:280.8px;width:86px;height:16px;overflow:hidden">
<div style="position:absolute;left:-4.60px;top:6.00px;font-family:'Liberation Sans';font-size:7.15px;line-height:7.15px;font-weight:400;color:#2c2c34;white-space:pre;">credit union</div>
</div>
<svg style="position:absolute;left:146.3px;top:285.7px;" width="7.5" height="8" viewBox="0 0 7.5 8"><circle cx="3.6" cy="4" r="3.5" fill="#4aa6e6"/><path d="M3.2 7.4 Q2.4 4.2 4.5 1.2 Q7.3 2.4 7.3 4.6 Q7 7.2 4.6 7.6 Z" fill="#f07a2a"/><circle cx="5.2" cy="4.4" r="1.3" fill="#f8c040"/></svg>
<div style="position:absolute;left:155.60px;top:287.00px;font-family:'Liberation Sans';font-size:7.15px;line-height:7.15px;font-weight:400;color:#2c2c34;white-space:pre;">Paul</div>
<div style="position:absolute;left:242.2px;top:285.1px;width:17.1px;height:8.6px;background:#fbeac0;border-radius:2px"></div>
<div style="position:absolute;left:244.70px;top:287.00px;font-family:'Liberation Sans';font-size:6.30px;line-height:6.30px;font-weight:400;color:#3a3224;white-space:pre;letter-spacing:-0.277px;-webkit-text-stroke:0.12px #3a3224;">Paul</div>
<div style="position:absolute;left:337.80px;top:286.00px;font-family:'Liberation Sans';font-size:7.20px;line-height:7.20px;font-weight:400;color:#3c3c44;white-space:pre;">[object Object]</div>
<svg style="position:absolute;left:419.2px;top:286.0px;" width="7" height="6.5" viewBox="0 0 7 6.5"><path d="M3.5 0.7 L6.5 5.9 H0.5 Z" fill="none" stroke="#d4bcb4" stroke-width="0.8" stroke-linejoin="round"/><path d="M3.5 2.4 V4" stroke="#d4bcb4" stroke-width="0.7"/><circle cx="3.5" cy="4.9" r="0.35" fill="#d4bcb4"/></svg>
<div style="position:absolute;left:754.00px;top:287.00px;font-family:'Liberation Sans';font-size:7.15px;line-height:7.15px;font-weight:400;color:#8e8e96;white-space:pre;letter-spacing:-0.007px;">Run condition not met</div>
<div style="position:absolute;left:970px;top:280.8px;width:42px;height:16px;overflow:hidden">
<div style="position:absolute;left:1.50px;top:6.00px;font-family:'Liberation Sans';font-size:7.15px;line-height:7.15px;font-weight:400;color:#8e8e96;white-space:pre;letter-spacing:-0.007px;">Run condition not met</div>
</div>
<div style="position:absolute;left:14.60px;top:304.00px;font-family:'Liberation Sans';font-size:6.30px;line-height:6.30px;font-weight:400;color:#8e8e96;white-space:pre;">16</div>
<div style="position:absolute;left:54.5px;top:297.6px;width:86px;height:16px;overflow:hidden">
<div style="position:absolute;left:-4.00px;top:6.00px;font-family:'Liberation Sans';font-size:7.15px;line-height:7.15px;font-weight:400;color:#2c2c34;white-space:pre;">utilities</div>
</div>
<svg style="position:absolute;left:146.3px;top:302.5px;" width="7.5" height="8" viewBox="0 0 7.5 8"><circle cx="3.6" cy="4" r="3.5" fill="#4aa6e6"/><path d="M3.2 7.4 Q2.4 4.2 4.5 1.2 Q7.3 2.4 7.3 4.6 Q7 7.2 4.6 7.6 Z" fill="#f07a2a"/><circle cx="5.2" cy="4.4" r="1.3" fill="#f8c040"/></svg>
<div style="position:absolute;left:155.60px;top:304.00px;font-family:'Liberation Sans';font-size:7.15px;line-height:7.15px;font-weight:400;color:#2c2c34;white-space:pre;">Paul</div>
<div style="position:absolute;left:242.2px;top:301.90000000000003px;width:17.1px;height:8.6px;background:#fbeac0;border-radius:2px"></div>
<div style="position:absolute;left:244.70px;top:304.00px;font-family:'Liberation Sans';font-size:6.30px;line-height:6.30px;font-weight:400;color:#3a3224;white-space:pre;letter-spacing:-0.277px;-webkit-text-stroke:0.12px #3a3224;">Paul</div>
<div style="position:absolute;left:337.80px;top:303.00px;font-family:'Liberation Sans';font-size:7.20px;line-height:7.20px;font-weight:400;color:#3c3c44;white-space:pre;">[object Object]</div>
<svg style="position:absolute;left:419.2px;top:302.8px;" width="7" height="6.5" viewBox="0 0 7 6.5"><path d="M3.5 0.7 L6.5 5.9 H0.5 Z" fill="none" stroke="#d4bcb4" stroke-width="0.8" stroke-linejoin="round"/><path d="M3.5 2.4 V4" stroke="#d4bcb4" stroke-width="0.7"/><circle cx="3.5" cy="4.9" r="0.35" fill="#d4bcb4"/></svg>
<div style="position:absolute;left:754.00px;top:304.00px;font-family:'Liberation Sans';font-size:7.15px;line-height:7.15px;font-weight:400;color:#8e8e96;white-space:pre;letter-spacing:-0.007px;">Run condition not met</div>
<div style="position:absolute;left:970px;top:297.6px;width:42px;height:16px;overflow:hidden">
<div style="position:absolute;left:1.50px;top:6.00px;font-family:'Liberation Sans';font-size:7.15px;line-height:7.15px;font-weight:400;color:#8e8e96;white-space:pre;letter-spacing:-0.007px;">Run condition not met</div>
</div>
<div style="position:absolute;left:14.60px;top:321.00px;font-family:'Liberation Sans';font-size:6.30px;line-height:6.30px;font-weight:400;color:#8e8e96;white-space:pre;">17</div>
<div style="position:absolute;left:54.5px;top:314.4px;width:86px;height:16px;overflow:hidden">
<div style="position:absolute;left:-4.00px;top:6.00px;font-family:'Liberation Sans';font-size:7.15px;line-height:7.15px;font-weight:400;color:#2c2c34;white-space:pre;">utilities</div>
</div>
<svg style="position:absolute;left:146.3px;top:319.29999999999995px;" width="7.5" height="8" viewBox="0 0 7.5 8"><circle cx="3.6" cy="4" r="3.5" fill="#4aa6e6"/><path d="M3.2 7.4 Q2.4 4.2 4.5 1.2 Q7.3 2.4 7.3 4.6 Q7 7.2 4.6 7.6 Z" fill="#f07a2a"/><circle cx="5.2" cy="4.4" r="1.3" fill="#f8c040"/></svg>
<div style="position:absolute;left:155.60px;top:321.00px;font-family:'Liberation Sans';font-size:7.15px;line-height:7.15px;font-weight:400;color:#2c2c34;white-space:pre;">Chris</div>
<div style="position:absolute;left:242.2px;top:318.7px;width:19px;height:8.4px;background:#eaf0f8;border-radius:2px"></div>
<div style="position:absolute;left:245.00px;top:321.00px;font-family:'Liberation Sans';font-size:6.30px;line-height:6.30px;font-weight:400;color:#3c4652;white-space:pre;letter-spacing:-0.200px;-webkit-text-stroke:0.12px #3c4652;">Chris</div>
<div style="position:absolute;left:337.80px;top:320.00px;font-family:'Liberation Sans';font-size:7.20px;line-height:7.20px;font-weight:400;color:#3c3c44;white-space:pre;">[object Object]</div>
<svg style="position:absolute;left:419.2px;top:319.59999999999997px;" width="7" height="6.5" viewBox="0 0 7 6.5"><path d="M3.5 0.7 L6.5 5.9 H0.5 Z" fill="none" stroke="#d4bcb4" stroke-width="0.8" stroke-linejoin="round"/><path d="M3.5 2.4 V4" stroke="#d4bcb4" stroke-width="0.7"/><circle cx="3.5" cy="4.9" r="0.35" fill="#d4bcb4"/></svg>
<div style="position:absolute;left:754.00px;top:321.00px;font-family:'Liberation Sans';font-size:7.15px;line-height:7.15px;font-weight:400;color:#8e8e96;white-space:pre;letter-spacing:-0.007px;">Run condition not met</div>
<div style="position:absolute;left:970px;top:314.4px;width:42px;height:16px;overflow:hidden">
<div style="position:absolute;left:1.50px;top:6.00px;font-family:'Liberation Sans';font-size:7.15px;line-height:7.15px;font-weight:400;color:#8e8e96;white-space:pre;letter-spacing:-0.007px;">Run condition not met</div>
</div>
<div style="position:absolute;left:14.60px;top:338.00px;font-family:'Liberation Sans';font-size:6.30px;line-height:6.30px;font-weight:400;color:#8e8e96;white-space:pre;">18</div>
<div style="position:absolute;left:54.5px;top:331.20000000000005px;width:86px;height:16px;overflow:hidden">
<div style="position:absolute;left:-4.60px;top:6.00px;font-family:'Liberation Sans';font-size:7.15px;line-height:7.15px;font-weight:400;color:#2c2c34;white-space:pre;">financial advisor</div>
</div>
<svg style="position:absolute;left:146.3px;top:336.1px;" width="7.5" height="8" viewBox="0 0 7.5 8"><circle cx="3.6" cy="4" r="3.5" fill="#4aa6e6"/><path d="M3.2 7.4 Q2.4 4.2 4.5 1.2 Q7.3 2.4 7.3 4.6 Q7 7.2 4.6 7.6 Z" fill="#f07a2a"/><circle cx="5.2" cy="4.4" r="1.3" fill="#f8c040"/></svg>
<div style="position:absolute;left:155.60px;top:338.00px;font-family:'Liberation Sans';font-size:7.15px;line-height:7.15px;font-weight:400;color:#2c2c34;white-space:pre;">Paul</div>
<div style="position:absolute;left:242.2px;top:335.50000000000006px;width:17.1px;height:8.6px;background:#fbeac0;border-radius:2px"></div>
<div style="position:absolute;left:244.70px;top:338.00px;font-family:'Liberation Sans';font-size:6.30px;line-height:6.30px;font-weight:400;color:#3a3224;white-space:pre;letter-spacing:-0.277px;-webkit-text-stroke:0.12px #3a3224;">Paul</div>
<div style="position:absolute;left:337.80px;top:337.00px;font-family:'Liberation Sans';font-size:7.20px;line-height:7.20px;font-weight:400;color:#3c3c44;white-space:pre;">[object Object]</div>
<svg style="position:absolute;left:419.2px;top:336.40000000000003px;" width="7" height="6.5" viewBox="0 0 7 6.5"><path d="M3.5 0.7 L6.5 5.9 H0.5 Z" fill="none" stroke="#d4bcb4" stroke-width="0.8" stroke-linejoin="round"/><path d="M3.5 2.4 V4" stroke="#d4bcb4" stroke-width="0.7"/><circle cx="3.5" cy="4.9" r="0.35" fill="#d4bcb4"/></svg>
<div style="position:absolute;left:754.00px;top:338.00px;font-family:'Liberation Sans';font-size:7.15px;line-height:7.15px;font-weight:400;color:#8e8e96;white-space:pre;letter-spacing:-0.007px;">Run condition not met</div>
<div style="position:absolute;left:970px;top:331.20000000000005px;width:42px;height:16px;overflow:hidden">
<div style="position:absolute;left:1.50px;top:6.00px;font-family:'Liberation Sans';font-size:7.15px;line-height:7.15px;font-weight:400;color:#8e8e96;white-space:pre;letter-spacing:-0.007px;">Run condition not met</div>
</div>
<div style="position:absolute;left:14.60px;top:354.00px;font-family:'Liberation Sans';font-size:6.30px;line-height:6.30px;font-weight:400;color:#8e8e96;white-space:pre;">19</div>
<div style="position:absolute;left:54.5px;top:348.0px;width:86px;height:16px;overflow:hidden">
<div style="position:absolute;left:-4.00px;top:6.00px;font-family:'Liberation Sans';font-size:7.15px;line-height:7.15px;font-weight:400;color:#2c2c34;white-space:pre;">home heating</div>
</div>
<svg style="position:absolute;left:146.3px;top:352.9px;" width="7.5" height="8" viewBox="0 0 7.5 8"><circle cx="3.6" cy="4" r="3.5" fill="#4aa6e6"/><path d="M3.2 7.4 Q2.4 4.2 4.5 1.2 Q7.3 2.4 7.3 4.6 Q7 7.2 4.6 7.6 Z" fill="#f07a2a"/><circle cx="5.2" cy="4.4" r="1.3" fill="#f8c040"/></svg>
<div style="position:absolute;left:155.60px;top:354.00px;font-family:'Liberation Sans';font-size:7.15px;line-height:7.15px;font-weight:400;color:#2c2c34;white-space:pre;">Paul</div>
<div style="position:absolute;left:242.2px;top:352.3px;width:17.1px;height:8.6px;background:#fbeac0;border-radius:2px"></div>
<div style="position:absolute;left:244.70px;top:355.00px;font-family:'Liberation Sans';font-size:6.30px;line-height:6.30px;font-weight:400;color:#3a3224;white-space:pre;letter-spacing:-0.277px;-webkit-text-stroke:0.12px #3a3224;">Paul</div>
<div style="position:absolute;left:337.80px;top:353.00px;font-family:'Liberation Sans';font-size:7.20px;line-height:7.20px;font-weight:400;color:#3c3c44;white-space:pre;">[object Object]</div>
<svg style="position:absolute;left:419.2px;top:353.2px;" width="7" height="6.5" viewBox="0 0 7 6.5"><path d="M3.5 0.7 L6.5 5.9 H0.5 Z" fill="none" stroke="#d4bcb4" stroke-width="0.8" stroke-linejoin="round"/><path d="M3.5 2.4 V4" stroke="#d4bcb4" stroke-width="0.7"/><circle cx="3.5" cy="4.9" r="0.35" fill="#d4bcb4"/></svg>
<div style="position:absolute;left:754.00px;top:354.00px;font-family:'Liberation Sans';font-size:7.15px;line-height:7.15px;font-weight:400;color:#8e8e96;white-space:pre;letter-spacing:-0.007px;">Run condition not met</div>
<div style="position:absolute;left:970px;top:348.0px;width:42px;height:16px;overflow:hidden">
<div style="position:absolute;left:1.50px;top:6.00px;font-family:'Liberation Sans';font-size:7.15px;line-height:7.15px;font-weight:400;color:#8e8e96;white-space:pre;letter-spacing:-0.007px;">Run condition not met</div>
</div>
<div style="position:absolute;left:14.60px;top:371.00px;font-family:'Liberation Sans';font-size:6.30px;line-height:6.30px;font-weight:400;color:#8e8e96;white-space:pre;">20</div>
<div style="position:absolute;left:54.5px;top:364.8px;width:86px;height:16px;overflow:hidden">
<div style="position:absolute;left:-4.60px;top:6.00px;font-family:'Liberation Sans';font-size:7.15px;line-height:7.15px;font-weight:400;color:#2c2c34;white-space:pre;">tech</div>
</div>
<svg style="position:absolute;left:146.3px;top:369.7px;" width="7.5" height="8" viewBox="0 0 7.5 8"><circle cx="3.6" cy="4" r="3.5" fill="#4aa6e6"/><path d="M3.2 7.4 Q2.4 4.2 4.5 1.2 Q7.3 2.4 7.3 4.6 Q7 7.2 4.6 7.6 Z" fill="#f07a2a"/><circle cx="5.2" cy="4.4" r="1.3" fill="#f8c040"/></svg>
<div style="position:absolute;left:155.60px;top:371.00px;font-family:'Liberation Sans';font-size:7.15px;line-height:7.15px;font-weight:400;color:#2c2c34;white-space:pre;">Paul</div>
<div style="position:absolute;left:242.2px;top:369.1px;width:17.1px;height:8.6px;background:#fbeac0;border-radius:2px"></div>
<div style="position:absolute;left:244.70px;top:371.00px;font-family:'Liberation Sans';font-size:6.30px;line-height:6.30px;font-weight:400;color:#3a3224;white-space:pre;letter-spacing:-0.277px;-webkit-text-stroke:0.12px #3a3224;">Paul</div>
<div style="position:absolute;left:337.80px;top:370.00px;font-family:'Liberation Sans';font-size:7.20px;line-height:7.20px;font-weight:400;color:#3c3c44;white-space:pre;">[object Object]</div>
<svg style="position:absolute;left:419.2px;top:370.0px;" width="7" height="6.5" viewBox="0 0 7 6.5"><path d="M3.5 0.7 L6.5 5.9 H0.5 Z" fill="none" stroke="#d4bcb4" stroke-width="0.8" stroke-linejoin="round"/><path d="M3.5 2.4 V4" stroke="#d4bcb4" stroke-width="0.7"/><circle cx="3.5" cy="4.9" r="0.35" fill="#d4bcb4"/></svg>
<div style="position:absolute;left:754.00px;top:371.00px;font-family:'Liberation Sans';font-size:7.15px;line-height:7.15px;font-weight:400;color:#8e8e96;white-space:pre;letter-spacing:-0.007px;">Run condition not met</div>
<div style="position:absolute;left:970px;top:364.8px;width:42px;height:16px;overflow:hidden">
<div style="position:absolute;left:1.50px;top:6.00px;font-family:'Liberation Sans';font-size:7.15px;line-height:7.15px;font-weight:400;color:#8e8e96;white-space:pre;letter-spacing:-0.007px;">Run condition not met</div>
</div>
<div style="position:absolute;left:14.60px;top:388.00px;font-family:'Liberation Sans';font-size:6.30px;line-height:6.30px;font-weight:400;color:#8e8e96;white-space:pre;">21</div>
<div style="position:absolute;left:54.5px;top:381.6px;width:86px;height:16px;overflow:hidden">
<div style="position:absolute;left:-4.00px;top:6.00px;font-family:'Liberation Sans';font-size:7.15px;line-height:7.15px;font-weight:400;color:#2c2c34;white-space:pre;">insurance</div>
</div>
<svg style="position:absolute;left:146.3px;top:386.5px;" width="7.5" height="8" viewBox="0 0 7.5 8"><circle cx="3.6" cy="4" r="3.5" fill="#4aa6e6"/><path d="M3.2 7.4 Q2.4 4.2 4.5 1.2 Q7.3 2.4 7.3 4.6 Q7 7.2 4.6 7.6 Z" fill="#f07a2a"/><circle cx="5.2" cy="4.4" r="1.3" fill="#f8c040"/></svg>
<div style="position:absolute;left:155.60px;top:388.00px;font-family:'Liberation Sans';font-size:7.15px;line-height:7.15px;font-weight:400;color:#2c2c34;white-space:pre;">Paul</div>
<div style="position:absolute;left:242.2px;top:385.90000000000003px;width:17.1px;height:8.6px;background:#fbeac0;border-radius:2px"></div>
<div style="position:absolute;left:244.70px;top:388.00px;font-family:'Liberation Sans';font-size:6.30px;line-height:6.30px;font-weight:400;color:#3a3224;white-space:pre;letter-spacing:-0.277px;-webkit-text-stroke:0.12px #3a3224;">Paul</div>
<div style="position:absolute;left:337.80px;top:387.00px;font-family:'Liberation Sans';font-size:7.20px;line-height:7.20px;font-weight:400;color:#3c3c44;white-space:pre;">[object Object]</div>
<svg style="position:absolute;left:419.2px;top:386.8px;" width="7" height="6.5" viewBox="0 0 7 6.5"><path d="M3.5 0.7 L6.5 5.9 H0.5 Z" fill="none" stroke="#d4bcb4" stroke-width="0.8" stroke-linejoin="round"/><path d="M3.5 2.4 V4" stroke="#d4bcb4" stroke-width="0.7"/><circle cx="3.5" cy="4.9" r="0.35" fill="#d4bcb4"/></svg>
<div style="position:absolute;left:754.00px;top:388.00px;font-family:'Liberation Sans';font-size:7.15px;line-height:7.15px;font-weight:400;color:#8e8e96;white-space:pre;letter-spacing:-0.007px;">Run condition not met</div>
<div style="position:absolute;left:970px;top:381.6px;width:42px;height:16px;overflow:hidden">
<div style="position:absolute;left:1.50px;top:6.00px;font-family:'Liberation Sans';font-size:7.15px;line-height:7.15px;font-weight:400;color:#8e8e96;white-space:pre;letter-spacing:-0.007px;">Run condition not met</div>
</div>
<div style="position:absolute;left:14.60px;top:405.00px;font-family:'Liberation Sans';font-size:6.30px;line-height:6.30px;font-weight:400;color:#8e8e96;white-space:pre;">22</div>
<div style="position:absolute;left:54.5px;top:398.4px;width:86px;height:16px;overflow:hidden">
<div style="position:absolute;left:-4.60px;top:6.00px;font-family:'Liberation Sans';font-size:7.15px;line-height:7.15px;font-weight:400;color:#2c2c34;white-space:pre;">retail</div>
</div>
<svg style="position:absolute;left:146.3px;top:403.29999999999995px;" width="7.5" height="8" viewBox="0 0 7.5 8"><circle cx="3.6" cy="4" r="3.5" fill="#4aa6e6"/><path d="M3.2 7.4 Q2.4 4.2 4.5 1.2 Q7.3 2.4 7.3 4.6 Q7 7.2 4.6 7.6 Z" fill="#f07a2a"/><circle cx="5.2" cy="4.4" r="1.3" fill="#f8c040"/></svg>
<div style="position:absolute;left:155.60px;top:405.00px;font-family:'Liberation Sans';font-size:7.15px;line-height:7.15px;font-weight:400;color:#2c2c34;white-space:pre;">Paul</div>
<div style="position:absolute;left:242.2px;top:402.7px;width:17.1px;height:8.6px;background:#fbeac0;border-radius:2px"></div>
<div style="position:absolute;left:244.70px;top:405.00px;font-family:'Liberation Sans';font-size:6.30px;line-height:6.30px;font-weight:400;color:#3a3224;white-space:pre;letter-spacing:-0.277px;-webkit-text-stroke:0.12px #3a3224;">Paul</div>
<div style="position:absolute;left:337.80px;top:404.00px;font-family:'Liberation Sans';font-size:7.20px;line-height:7.20px;font-weight:400;color:#3c3c44;white-space:pre;">[object Object]</div>
<svg style="position:absolute;left:419.2px;top:403.59999999999997px;" width="7" height="6.5" viewBox="0 0 7 6.5"><path d="M3.5 0.7 L6.5 5.9 H0.5 Z" fill="none" stroke="#d4bcb4" stroke-width="0.8" stroke-linejoin="round"/><path d="M3.5 2.4 V4" stroke="#d4bcb4" stroke-width="0.7"/><circle cx="3.5" cy="4.9" r="0.35" fill="#d4bcb4"/></svg>
<div style="position:absolute;left:754.00px;top:405.00px;font-family:'Liberation Sans';font-size:7.15px;line-height:7.15px;font-weight:400;color:#8e8e96;white-space:pre;letter-spacing:-0.007px;">Run condition not met</div>
<div style="position:absolute;left:970px;top:398.4px;width:42px;height:16px;overflow:hidden">
<div style="position:absolute;left:1.50px;top:6.00px;font-family:'Liberation Sans';font-size:7.15px;line-height:7.15px;font-weight:400;color:#8e8e96;white-space:pre;letter-spacing:-0.007px;">Run condition not met</div>
</div>
<div style="position:absolute;left:14.60px;top:422.00px;font-family:'Liberation Sans';font-size:6.30px;line-height:6.30px;font-weight:400;color:#8e8e96;white-space:pre;">23</div>
<div style="position:absolute;left:54.5px;top:415.20000000000005px;width:86px;height:16px;overflow:hidden">
<div style="position:absolute;left:-4.60px;top:6.00px;font-family:'Liberation Sans';font-size:7.15px;line-height:7.15px;font-weight:400;color:#2c2c34;white-space:pre;">legal tech</div>
</div>
<svg style="position:absolute;left:146.3px;top:420.1px;" width="7.5" height="8" viewBox="0 0 7.5 8"><circle cx="3.6" cy="4" r="3.5" fill="#4aa6e6"/><path d="M3.2 7.4 Q2.4 4.2 4.5 1.2 Q7.3 2.4 7.3 4.6 Q7 7.2 4.6 7.6 Z" fill="#f07a2a"/><circle cx="5.2" cy="4.4" r="1.3" fill="#f8c040"/></svg>
<div style="position:absolute;left:155.60px;top:422.00px;font-family:'Liberation Sans';font-size:7.15px;line-height:7.15px;font-weight:400;color:#2c2c34;white-space:pre;">Chris</div>
<div style="position:absolute;left:242.2px;top:419.50000000000006px;width:19px;height:8.4px;background:#eaf0f8;border-radius:2px"></div>
<div style="position:absolute;left:245.00px;top:422.00px;font-family:'Liberation Sans';font-size:6.30px;line-height:6.30px;font-weight:400;color:#3c4652;white-space:pre;letter-spacing:-0.200px;-webkit-text-stroke:0.12px #3c4652;">Chris</div>
<div style="position:absolute;left:337.80px;top:421.00px;font-family:'Liberation Sans';font-size:7.20px;line-height:7.20px;font-weight:400;color:#3c3c44;white-space:pre;">[object Object]</div>
<svg style="position:absolute;left:419.2px;top:420.40000000000003px;" width="7" height="6.5" viewBox="0 0 7 6.5"><path d="M3.5 0.7 L6.5 5.9 H0.5 Z" fill="none" stroke="#f0b48a" stroke-width="0.8" stroke-linejoin="round"/><path d="M3.5 2.4 V4" stroke="#f0b48a" stroke-width="0.7"/><circle cx="3.5" cy="4.9" r="0.35" fill="#f0b48a"/></svg>
<div style="position:absolute;left:754.00px;top:422.00px;font-family:'Liberation Sans';font-size:7.15px;line-height:7.15px;font-weight:400;color:#8e8e96;white-space:pre;letter-spacing:-0.007px;">Run condition not met</div>
<div style="position:absolute;left:970px;top:415.20000000000005px;width:42px;height:16px;overflow:hidden">
<div style="position:absolute;left:1.50px;top:6.00px;font-family:'Liberation Sans';font-size:7.15px;line-height:7.15px;font-weight:400;color:#8e8e96;white-space:pre;letter-spacing:-0.007px;">Run condition not met</div>
</div>
<div style="position:absolute;left:14.60px;top:438.00px;font-family:'Liberation Sans';font-size:6.30px;line-height:6.30px;font-weight:400;color:#8e8e96;white-space:pre;">24</div>
<div style="position:absolute;left:54.5px;top:432.0px;width:86px;height:16px;overflow:hidden">
<div style="position:absolute;left:-4.00px;top:6.00px;font-family:'Liberation Sans';font-size:7.15px;line-height:7.15px;font-weight:400;color:#2c2c34;white-space:pre;">snack food</div>
</div>
<svg style="position:absolute;left:146.3px;top:436.9px;" width="7.5" height="8" viewBox="0 0 7.5 8"><circle cx="3.6" cy="4" r="3.5" fill="#4aa6e6"/><path d="M3.2 7.4 Q2.4 4.2 4.5 1.2 Q7.3 2.4 7.3 4.6 Q7 7.2 4.6 7.6 Z" fill="#f07a2a"/><circle cx="5.2" cy="4.4" r="1.3" fill="#f8c040"/></svg>
<div style="position:absolute;left:155.60px;top:438.00px;font-family:'Liberation Sans';font-size:7.15px;line-height:7.15px;font-weight:400;color:#2c2c34;white-space:pre;">Paul</div>
<div style="position:absolute;left:242.2px;top:436.3px;width:17.1px;height:8.6px;background:#fbeac0;border-radius:2px"></div>
<div style="position:absolute;left:244.70px;top:439.00px;font-family:'Liberation Sans';font-size:6.30px;line-height:6.30px;font-weight:400;color:#3a3224;white-space:pre;letter-spacing:-0.277px;-webkit-text-stroke:0.12px #3a3224;">Paul</div>
<div style="position:absolute;left:337.80px;top:437.00px;font-family:'Liberation Sans';font-size:7.20px;line-height:7.20px;font-weight:400;color:#3c3c44;white-space:pre;">[object Object]</div>
<svg style="position:absolute;left:419.2px;top:437.2px;" width="7" height="6.5" viewBox="0 0 7 6.5"><path d="M3.5 0.7 L6.5 5.9 H0.5 Z" fill="none" stroke="#f0b48a" stroke-width="0.8" stroke-linejoin="round"/><path d="M3.5 2.4 V4" stroke="#f0b48a" stroke-width="0.7"/><circle cx="3.5" cy="4.9" r="0.35" fill="#f0b48a"/></svg>
<div style="position:absolute;left:754.00px;top:438.00px;font-family:'Liberation Sans';font-size:7.15px;line-height:7.15px;font-weight:400;color:#8e8e96;white-space:pre;letter-spacing:-0.007px;">Run condition not met</div>
<div style="position:absolute;left:970px;top:432.0px;width:42px;height:16px;overflow:hidden">
<div style="position:absolute;left:1.50px;top:6.00px;font-family:'Liberation Sans';font-size:7.15px;line-height:7.15px;font-weight:400;color:#8e8e96;white-space:pre;letter-spacing:-0.007px;">Run condition not met</div>
</div>
<div style="position:absolute;left:14.60px;top:455.00px;font-family:'Liberation Sans';font-size:6.30px;line-height:6.30px;font-weight:400;color:#8e8e96;white-space:pre;">25</div>
<div style="position:absolute;left:54.5px;top:448.8px;width:86px;height:16px;overflow:hidden">
<div style="position:absolute;left:-4.60px;top:6.00px;font-family:'Liberation Sans';font-size:7.15px;line-height:7.15px;font-weight:400;color:#2c2c34;white-space:pre;">pharmacy</div>
</div>
<svg style="position:absolute;left:146.3px;top:453.7px;" width="7.5" height="8" viewBox="0 0 7.5 8"><circle cx="3.6" cy="4" r="3.5" fill="#4aa6e6"/><path d="M3.2 7.4 Q2.4 4.2 4.5 1.2 Q7.3 2.4 7.3 4.6 Q7 7.2 4.6 7.6 Z" fill="#f07a2a"/><circle cx="5.2" cy="4.4" r="1.3" fill="#f8c040"/></svg>
<div style="position:absolute;left:155.60px;top:455.00px;font-family:'Liberation Sans';font-size:7.15px;line-height:7.15px;font-weight:400;color:#2c2c34;white-space:pre;">Paul</div>
<div style="position:absolute;left:242.2px;top:453.1px;width:17.1px;height:8.6px;background:#fbeac0;border-radius:2px"></div>
<div style="position:absolute;left:244.70px;top:455.00px;font-family:'Liberation Sans';font-size:6.30px;line-height:6.30px;font-weight:400;color:#3a3224;white-space:pre;letter-spacing:-0.277px;-webkit-text-stroke:0.12px #3a3224;">Paul</div>
<div style="position:absolute;left:337.80px;top:454.00px;font-family:'Liberation Sans';font-size:7.20px;line-height:7.20px;font-weight:400;color:#3c3c44;white-space:pre;">[object Object]</div>
<svg style="position:absolute;left:419.2px;top:454.0px;" width="7" height="6.5" viewBox="0 0 7 6.5"><path d="M3.5 0.7 L6.5 5.9 H0.5 Z" fill="none" stroke="#f0b48a" stroke-width="0.8" stroke-linejoin="round"/><path d="M3.5 2.4 V4" stroke="#f0b48a" stroke-width="0.7"/><circle cx="3.5" cy="4.9" r="0.35" fill="#f0b48a"/></svg>
<div style="position:absolute;left:754.00px;top:455.00px;font-family:'Liberation Sans';font-size:7.15px;line-height:7.15px;font-weight:400;color:#8e8e96;white-space:pre;letter-spacing:-0.007px;">Run condition not met</div>
<div style="position:absolute;left:970px;top:448.8px;width:42px;height:16px;overflow:hidden">
<div style="position:absolute;left:1.50px;top:6.00px;font-family:'Liberation Sans';font-size:7.15px;line-height:7.15px;font-weight:400;color:#8e8e96;white-space:pre;letter-spacing:-0.007px;">Run condition not met</div>
</div>
<div style="position:absolute;left:14.60px;top:472.00px;font-family:'Liberation Sans';font-size:6.30px;line-height:6.30px;font-weight:400;color:#8e8e96;white-space:pre;">26</div>
<div style="position:absolute;left:54.5px;top:465.6px;width:86px;height:16px;overflow:hidden">
<div style="position:absolute;left:-4.00px;top:6.00px;font-family:'Liberation Sans';font-size:7.15px;line-height:7.15px;font-weight:400;color:#2c2c34;white-space:pre;">healthcare</div>
</div>
<svg style="position:absolute;left:146.3px;top:470.5px;" width="7.5" height="8" viewBox="0 0 7.5 8"><circle cx="3.6" cy="4" r="3.5" fill="#4aa6e6"/><path d="M3.2 7.4 Q2.4 4.2 4.5 1.2 Q7.3 2.4 7.3 4.6 Q7 7.2 4.6 7.6 Z" fill="#f07a2a"/><circle cx="5.2" cy="4.4" r="1.3" fill="#f8c040"/></svg>
<div style="position:absolute;left:155.60px;top:472.00px;font-family:'Liberation Sans';font-size:7.15px;line-height:7.15px;font-weight:400;color:#2c2c34;white-space:pre;">Chris</div>
<div style="position:absolute;left:242.2px;top:469.90000000000003px;width:19px;height:8.4px;background:#eaf0f8;border-radius:2px"></div>
<div style="position:absolute;left:245.00px;top:472.00px;font-family:'Liberation Sans';font-size:6.30px;line-height:6.30px;font-weight:400;color:#3c4652;white-space:pre;letter-spacing:-0.200px;-webkit-text-stroke:0.12px #3c4652;">Chris</div>
<div style="position:absolute;left:337.80px;top:471.00px;font-family:'Liberation Sans';font-size:7.20px;line-height:7.20px;font-weight:400;color:#3c3c44;white-space:pre;">[object Object]</div>
<svg style="position:absolute;left:419.2px;top:470.8px;" width="7" height="6.5" viewBox="0 0 7 6.5"><path d="M3.5 0.7 L6.5 5.9 H0.5 Z" fill="none" stroke="#f0b48a" stroke-width="0.8" stroke-linejoin="round"/><path d="M3.5 2.4 V4" stroke="#f0b48a" stroke-width="0.7"/><circle cx="3.5" cy="4.9" r="0.35" fill="#f0b48a"/></svg>
<div style="position:absolute;left:754.00px;top:472.00px;font-family:'Liberation Sans';font-size:7.15px;line-height:7.15px;font-weight:400;color:#8e8e96;white-space:pre;letter-spacing:-0.007px;">Run condition not met</div>
<div style="position:absolute;left:970px;top:465.6px;width:42px;height:16px;overflow:hidden">
<div style="position:absolute;left:1.50px;top:6.00px;font-family:'Liberation Sans';font-size:7.15px;line-height:7.15px;font-weight:400;color:#8e8e96;white-space:pre;letter-spacing:-0.007px;">Run condition not met</div>
</div>
<div style="position:absolute;left:14.60px;top:489.00px;font-family:'Liberation Sans';font-size:6.30px;line-height:6.30px;font-weight:400;color:#8e8e96;white-space:pre;">27</div>
<div style="position:absolute;left:54.5px;top:482.40000000000003px;width:86px;height:16px;overflow:hidden">
<div style="position:absolute;left:-5.20px;top:6.00px;font-family:'Liberation Sans';font-size:7.15px;line-height:7.15px;font-weight:400;color:#2c2c34;white-space:pre;">media</div>
</div>
<svg style="position:absolute;left:146.3px;top:487.3px;" width="7.5" height="8" viewBox="0 0 7.5 8"><circle cx="3.6" cy="4" r="3.5" fill="#4aa6e6"/><path d="M3.2 7.4 Q2.4 4.2 4.5 1.2 Q7.3 2.4 7.3 4.6 Q7 7.2 4.6 7.6 Z" fill="#f07a2a"/><circle cx="5.2" cy="4.4" r="1.3" fill="#f8c040"/></svg>
<div style="position:absolute;left:155.60px;top:489.00px;font-family:'Liberation Sans';font-size:7.15px;line-height:7.15px;font-weight:400;color:#2c2c34;white-space:pre;">Chris</div>
<div style="position:absolute;left:242.2px;top:486.70000000000005px;width:19px;height:8.4px;background:#eaf0f8;border-radius:2px"></div>
<div style="position:absolute;left:245.00px;top:489.00px;font-family:'Liberation Sans';font-size:6.30px;line-height:6.30px;font-weight:400;color:#3c4652;white-space:pre;letter-spacing:-0.200px;-webkit-text-stroke:0.12px #3c4652;">Chris</div>
<div style="position:absolute;left:337.80px;top:488.00px;font-family:'Liberation Sans';font-size:7.20px;line-height:7.20px;font-weight:400;color:#3c3c44;white-space:pre;">[object Object]</div>
<svg style="position:absolute;left:419.2px;top:487.6px;" width="7" height="6.5" viewBox="0 0 7 6.5"><path d="M3.5 0.7 L6.5 5.9 H0.5 Z" fill="none" stroke="#f0b48a" stroke-width="0.8" stroke-linejoin="round"/><path d="M3.5 2.4 V4" stroke="#f0b48a" stroke-width="0.7"/><circle cx="3.5" cy="4.9" r="0.35" fill="#f0b48a"/></svg>
<div style="position:absolute;left:754.00px;top:489.00px;font-family:'Liberation Sans';font-size:7.15px;line-height:7.15px;font-weight:400;color:#8e8e96;white-space:pre;letter-spacing:-0.007px;">Run condition not met</div>
<div style="position:absolute;left:970px;top:482.40000000000003px;width:42px;height:16px;overflow:hidden">
<div style="position:absolute;left:1.50px;top:6.00px;font-family:'Liberation Sans';font-size:7.15px;line-height:7.15px;font-weight:400;color:#8e8e96;white-space:pre;letter-spacing:-0.007px;">Run condition not met</div>
</div>
<div style="position:absolute;left:14.60px;top:506.00px;font-family:'Liberation Sans';font-size:6.30px;line-height:6.30px;font-weight:400;color:#8e8e96;white-space:pre;">28</div>
<div style="position:absolute;left:54.5px;top:499.2px;width:86px;height:16px;overflow:hidden">
<div style="position:absolute;left:-4.60px;top:6.00px;font-family:'Liberation Sans';font-size:7.15px;line-height:7.15px;font-weight:400;color:#2c2c34;white-space:pre;">produce</div>
</div>
<svg style="position:absolute;left:146.3px;top:504.09999999999997px;" width="7.5" height="8" viewBox="0 0 7.5 8"><circle cx="3.6" cy="4" r="3.5" fill="#4aa6e6"/><path d="M3.2 7.4 Q2.4 4.2 4.5 1.2 Q7.3 2.4 7.3 4.6 Q7 7.2 4.6 7.6 Z" fill="#f07a2a"/><circle cx="5.2" cy="4.4" r="1.3" fill="#f8c040"/></svg>
<div style="position:absolute;left:155.60px;top:506.00px;font-family:'Liberation Sans';font-size:7.15px;line-height:7.15px;font-weight:400;color:#2c2c34;white-space:pre;">Chris</div>
<div style="position:absolute;left:242.2px;top:503.5px;width:19px;height:8.4px;background:#eaf0f8;border-radius:2px"></div>
<div style="position:absolute;left:245.00px;top:506.00px;font-family:'Liberation Sans';font-size:6.30px;line-height:6.30px;font-weight:400;color:#3c4652;white-space:pre;letter-spacing:-0.200px;-webkit-text-stroke:0.12px #3c4652;">Chris</div>
<div style="position:absolute;left:337.80px;top:504.00px;font-family:'Liberation Sans';font-size:7.20px;line-height:7.20px;font-weight:400;color:#3c3c44;white-space:pre;">[object Object]</div>
<svg style="position:absolute;left:419.2px;top:504.4px;" width="7" height="6.5" viewBox="0 0 7 6.5"><path d="M3.5 0.7 L6.5 5.9 H0.5 Z" fill="none" stroke="#f0b48a" stroke-width="0.8" stroke-linejoin="round"/><path d="M3.5 2.4 V4" stroke="#f0b48a" stroke-width="0.7"/><circle cx="3.5" cy="4.9" r="0.35" fill="#f0b48a"/></svg>
<div style="position:absolute;left:754.00px;top:506.00px;font-family:'Liberation Sans';font-size:7.15px;line-height:7.15px;font-weight:400;color:#8e8e96;white-space:pre;letter-spacing:-0.007px;">Run condition not met</div>
<div style="position:absolute;left:970px;top:499.2px;width:42px;height:16px;overflow:hidden">
<div style="position:absolute;left:1.50px;top:6.00px;font-family:'Liberation Sans';font-size:7.15px;line-height:7.15px;font-weight:400;color:#8e8e96;white-space:pre;letter-spacing:-0.007px;">Run condition not met</div>
</div>
<div style="position:absolute;left:14.60px;top:522.00px;font-family:'Liberation Sans';font-size:6.30px;line-height:6.30px;font-weight:400;color:#8e8e96;white-space:pre;">29</div>
<div style="position:absolute;left:54.5px;top:516.0px;width:86px;height:16px;overflow:hidden">
<div style="position:absolute;left:-4.00px;top:6.00px;font-family:'Liberation Sans';font-size:7.15px;line-height:7.15px;font-weight:400;color:#2c2c34;white-space:pre;">healthcare</div>
</div>
<svg style="position:absolute;left:146.3px;top:520.9px;" width="7.5" height="8" viewBox="0 0 7.5 8"><circle cx="3.6" cy="4" r="3.5" fill="#4aa6e6"/><path d="M3.2 7.4 Q2.4 4.2 4.5 1.2 Q7.3 2.4 7.3 4.6 Q7 7.2 4.6 7.6 Z" fill="#f07a2a"/><circle cx="5.2" cy="4.4" r="1.3" fill="#f8c040"/></svg>
<div style="position:absolute;left:155.60px;top:522.00px;font-family:'Liberation Sans';font-size:7.15px;line-height:7.15px;font-weight:400;color:#2c2c34;white-space:pre;">Chris</div>
<div style="position:absolute;left:242.2px;top:520.3px;width:19px;height:8.4px;background:#eaf0f8;border-radius:2px"></div>
<div style="position:absolute;left:245.00px;top:522.00px;font-family:'Liberation Sans';font-size:6.30px;line-height:6.30px;font-weight:400;color:#3c4652;white-space:pre;letter-spacing:-0.200px;-webkit-text-stroke:0.12px #3c4652;">Chris</div>
<div style="position:absolute;left:337.80px;top:521.00px;font-family:'Liberation Sans';font-size:7.20px;line-height:7.20px;font-weight:400;color:#3c3c44;white-space:pre;">[object Object]</div>
<svg style="position:absolute;left:419.2px;top:521.2px;" width="7" height="6.5" viewBox="0 0 7 6.5"><path d="M3.5 0.7 L6.5 5.9 H0.5 Z" fill="none" stroke="#f0b48a" stroke-width="0.8" stroke-linejoin="round"/><path d="M3.5 2.4 V4" stroke="#f0b48a" stroke-width="0.7"/><circle cx="3.5" cy="4.9" r="0.35" fill="#f0b48a"/></svg>
<div style="position:absolute;left:754.00px;top:522.00px;font-family:'Liberation Sans';font-size:7.15px;line-height:7.15px;font-weight:400;color:#8e8e96;white-space:pre;letter-spacing:-0.007px;">Run condition not met</div>
<div style="position:absolute;left:970px;top:516.0px;width:42px;height:16px;overflow:hidden">
<div style="position:absolute;left:1.50px;top:6.00px;font-family:'Liberation Sans';font-size:7.15px;line-height:7.15px;font-weight:400;color:#8e8e96;white-space:pre;letter-spacing:-0.007px;">Run condition not met</div>
</div>
<div style="position:absolute;left:6px;top:174.5px;width:1011px;height:5px;overflow:hidden">
<div style="position:absolute;left:140.3px;top:-3px;width:7.5px;height:4px;background:#4aa6e6;border-radius:0 0 3px 3px"></div>
<div style="position:absolute;left:236.2px;top:-4px;width:17.1px;height:5.2px;background:#fbeac0;border-radius:2px"></div>
<div style="position:absolute;left:331.9px;top:-4.5px;width:15.2px;height:5px;background:#c9f0d9;border-radius:2px"></div>
<div style="position:absolute;left:430px;top:-1px;width:2px;height:1.2px;background:#9a9aa2"></div>
<div style="position:absolute;left:440px;top:-1px;width:2px;height:1.2px;background:#9a9aa2"></div>
<div style="position:absolute;left:470px;top:-1px;width:3px;height:1.2px;background:#9a9aa2"></div>
</div>
<div style="position:absolute;left:6px;top:533px;width:1011px;height:5px;overflow:hidden">
<div style="position:absolute;left:140.3px;top:3px;width:7px;height:3px;background:#4aa6e6;border-radius:3px 3px 0 0"></div>
<div style="position:absolute;left:236.2px;top:4px;width:17.1px;height:4px;background:#fbeac0;border-radius:2px"></div>
</div>
<div style="position:absolute;left:333.5px;top:230.1px;width:96.5px;height:17.5px;border:1px dotted #7aa2de;border-bottom:none;box-sizing:border-box"></div>
<div style="position:absolute;left:333.6px;top:247.2px;width:1px;height:168.0px;background:#9fbde9"></div>
<div style="position:absolute;left:428.8px;top:247.2px;width:1px;height:168.0px;background:#9fbde9"></div>
<div style="position:absolute;left:333.6px;top:414.40000000000003px;width:96.2px;height:1px;background:#5d97e6"></div>
<div style="position:absolute;left:333.4px;top:246.7px;width:96.4px;height:18px;border-top:1px dotted #3f6aac;border-bottom:1px solid #4e5f78;border-left:1.5px solid #a9b6ca;border-right:1px solid #8cb4ec;box-sizing:border-box"></div>
<div style="position:absolute;left:427px;top:261.6px;width:5px;height:5px;border-radius:50%;background:#2f7be8"></div>
<div style="position:absolute;left:334.7px;top:265.7px;width:82px;height:18.2px;background:#fff;border-radius:3px;box-shadow:0 1px 3px rgba(0,0,0,0.18),0 0 0 0.5px rgba(0,0,0,0.06)"></div>
<svg style="position:absolute;left:340px;top:271.5px;" width="6" height="6.5" viewBox="0 0 6 6.5"><path d="M3 0.5 V5.7 M0.8 3.6 L3 5.8 L5.2 3.6" fill="none" stroke="#3a3a42" stroke-width="0.9"/></svg>
<div style="position:absolute;left:350.00px;top:273.00px;font-family:'Liberation Sans';font-size:6.95px;line-height:6.95px;font-weight:400;color:#3a3a42;white-space:pre;letter-spacing:-0.007px;">Paste and overwrite</div>
<svg style="position:absolute;left:7.5px;top:538.8px;" width="3" height="4" viewBox="0 0 3 4"><path d="M2.5 0.5 L0.8 2 L2.5 3.5" fill="none" stroke="#a0a0a8" stroke-width="0.7"/></svg>
<div style="position:absolute;left:421px;top:539.3px;width:590px;height:2.8px;background:#bdbdc3;border-radius:1.4px"></div>
<svg style="position:absolute;left:1012.5px;top:133px;" width="5" height="4" viewBox="0 0 5 4"><path d="M0.8 3 L2.5 1.2 L4.2 3" fill="none" stroke="#a0a0a8" stroke-width="0.7"/></svg>
<div style="position:absolute;left:1013.2px;top:144.4px;width:3px;height:15.5px;background:#c4c4ca;border-radius:1.5px"></div>
<div style="position:absolute;left:6px;top:543.2px;width:1011px;height:26.8px;background:#fff;border-radius:0 0 5px 5px"></div>
<div style="position:absolute;left:6px;top:542.7px;width:1011px;height:1px;background:#e8e9ee"></div>
<div style="position:absolute;left:55.2px;top:543.2px;width:1px;height:26.8px;background:#ececf0"></div>
<div style="position:absolute;left:125.4px;top:543.2px;width:60.2px;height:1.4px;background:#5a8ee6"></div>
<svg style="position:absolute;left:9.5px;top:552.8px;" width="8" height="8" viewBox="0 0 8 8"><circle cx="1.5" cy="4" r="1.1" fill="none" stroke="#55555d" stroke-width="0.8"/><circle cx="6.3" cy="1.4" r="1.1" fill="none" stroke="#55555d" stroke-width="0.8"/><circle cx="6.3" cy="6.6" r="1.1" fill="none" stroke="#55555d" stroke-width="0.8"/><path d="M2.6 4 H4 M4 4 Q4 1.4 5.2 1.4 M4 4 Q4 6.6 5.2 6.6" fill="none" stroke="#55555d" stroke-width="0.8"/></svg>
<div style="position:absolute;left:21.60px;top:553.00px;font-family:'Liberation Sans';font-size:7.20px;line-height:7.20px;font-weight:400;color:#4a4a52;white-space:pre;-webkit-text-stroke:0.15px #4a4a52;">Overview</div>
<svg style="position:absolute;left:59.8px;top:553.5px;" width="7" height="6" viewBox="0 0 7 6"><rect x="0" y="0" width="7" height="6" rx="0.8" fill="#45454d"/><path d="M0.6 2 H6.4 M2.3 2 V5.4 M2.3 3.7 H6.4" stroke="#fff" stroke-width="0.6"/></svg>
<div style="position:absolute;left:71.50px;top:553.00px;font-family:'Liberation Sans';font-size:7.00px;line-height:7.00px;font-weight:400;color:#4a4a52;white-space:pre;letter-spacing:-0.002px;-webkit-text-stroke:0.15px #4a4a52;">CSV Upload</div>
<svg style="position:absolute;left:115.5px;top:555px;" width="5.5" height="3.8" viewBox="0 0 5.5 3.8"><path d="M0.6 0.6 L2.75 2.9 L4.9 0.6" fill="none" stroke="#45454d" stroke-width="1"/></svg>
<svg style="position:absolute;left:129.4px;top:553.5px;" width="7" height="6" viewBox="0 0 7 6"><rect x="0" y="0" width="7" height="6" rx="0.8" fill="#5a8ee6"/><path d="M0.6 2 H6.4 M2.3 2 V5.4 M2.3 3.7 H6.4" stroke="#fff" stroke-width="0.6"/></svg>
<div style="position:absolute;left:140.60px;top:553.00px;font-family:'Liberation Sans';font-size:7.45px;line-height:7.45px;font-weight:400;color:#4f86e0;white-space:pre;-webkit-text-stroke:0.15px #4f86e0;">Contacts</div>
<svg style="position:absolute;left:175px;top:555px;" width="5.5" height="3.8" viewBox="0 0 5.5 3.8"><path d="M0.6 0.6 L2.75 2.9 L4.9 0.6" fill="none" stroke="#5a8ee6" stroke-width="1"/></svg>
<svg style="position:absolute;left:189.4px;top:553.5px;" width="7" height="6" viewBox="0 0 7 6"><rect x="0" y="0" width="7" height="6" rx="0.8" fill="#45454d"/><path d="M0.6 2 H6.4 M2.3 2 V5.4 M2.3 3.7 H6.4" stroke="#fff" stroke-width="0.6"/></svg>
<div style="position:absolute;left:200.40px;top:554.00px;font-family:'Liberation Sans';font-size:7.10px;line-height:7.10px;font-weight:400;color:#4a4a52;white-space:pre;letter-spacing:0.005px;-webkit-text-stroke:0.15px #4a4a52;">IIS Existing Customers - M...</div>
<svg style="position:absolute;left:297.5px;top:555px;" width="5.5" height="3.8" viewBox="0 0 5.5 3.8"><path d="M0.6 0.6 L2.75 2.9 L4.9 0.6" fill="none" stroke="#45454d" stroke-width="1"/></svg>
<svg style="position:absolute;left:312px;top:553.5px;" width="7" height="6" viewBox="0 0 7 6"><rect x="0" y="0" width="7" height="6" rx="0.8" fill="#45454d"/><path d="M0.6 2 H6.4 M2.3 2 V5.4 M2.3 3.7 H6.4" stroke="#fff" stroke-width="0.6"/></svg>
<div style="position:absolute;left:323.70px;top:554.00px;font-family:'Liberation Sans';font-size:7.10px;line-height:7.10px;font-weight:400;color:#4a4a52;white-space:pre;letter-spacing:-0.004px;-webkit-text-stroke:0.15px #4a4a52;">Pull in data from a Webhoo...</div>
<svg style="position:absolute;left:420.5px;top:555px;" width="5.5" height="3.8" viewBox="0 0 5.5 3.8"><path d="M0.6 0.6 L2.75 2.9 L4.9 0.6" fill="none" stroke="#45454d" stroke-width="1"/></svg>
<svg style="position:absolute;left:436.2px;top:553.5px;" width="7" height="6" viewBox="0 0 7 6"><rect x="0" y="0" width="7" height="6" rx="0.8" fill="#45454d"/><path d="M0.6 2 H6.4 M2.3 2 V5.4 M2.3 3.7 H6.4" stroke="#fff" stroke-width="0.6"/></svg>
<div style="position:absolute;left:446.60px;top:553.00px;font-family:'Liberation Sans';font-size:7.20px;line-height:7.20px;font-weight:400;color:#4a4a52;white-space:pre;letter-spacing:-0.002px;-webkit-text-stroke:0.15px #4a4a52;">New table</div>
<svg style="position:absolute;left:483px;top:555px;" width="5.5" height="3.8" viewBox="0 0 5.5 3.8"><path d="M0.6 0.6 L2.75 2.9 L4.9 0.6" fill="none" stroke="#45454d" stroke-width="1"/></svg>
<div style="position:absolute;left:497.4px;top:549.3px;width:29.8px;height:15.2px;background:#fff;border:1px solid #ededf1;border-radius:2.5px;box-sizing:border-box"></div>
<svg style="position:absolute;left:502px;top:553.3px;" width="6" height="6" viewBox="0 0 6 6"><path d="M3 0.3 V5.7 M0.3 3 H5.7" stroke="#34343c" stroke-width="1"/></svg>
<div style="position:absolute;left:510.30px;top:553.00px;font-family:'Liberation Sans';font-size:7.25px;line-height:7.25px;font-weight:400;color:#2c2c34;white-space:pre;-webkit-text-stroke:0.2px #2c2c34;">Add</div>
<div style="position:absolute;left:865.50px;top:554.00px;font-family:'Liberation Sans';font-size:7.00px;line-height:7.00px;font-weight:400;color:#8e8e96;white-space:pre;">&gt;99% of table completed</div>
<div style="position:absolute;left:908px;top:548.9px;width:105.6px;height:16.5px;background:#22a05a;border-radius:2.5px"></div>
<div style="position:absolute;left:914.00px;top:554.00px;font-family:'Liberation Sans';font-size:7.30px;line-height:7.30px;font-weight:400;color:#f0fff4;white-space:pre;letter-spacing:-0.008px;-webkit-text-stroke:0.12px #f0fff4;">Copied cell to clipboard</div>
<svg style="position:absolute;left:1001px;top:554.2px;" width="6" height="6" viewBox="0 0 6 6"><path d="M0.7 0.7 L5.3 5.3 M5.3 0.7 L0.7 5.3" stroke="#f0fff4" stroke-width="1"/></svg>
<div style="position:absolute;left:629px;top:518px;width:376.5px;height:36.2px;border-radius:4.5px;background:#f6f6f8;border:1.2px solid #74747c;box-sizing:border-box"></div>
<div style="position:absolute;left:633.6px;top:521.8px;width:367.8px;height:27px;background:#4b4749;border-radius:1px"></div>
<div style="position:absolute;left:639.1px;top:532.2px;width:1.5px;height:6px;background:#d0d0d4"></div>
<div style="position:absolute;left:641.7px;top:532.2px;width:1.5px;height:6px;background:#d0d0d4"></div>
<div style="position:absolute;left:648.00px;top:531.00px;font-family:'Liberation Sans';font-size:8.40px;line-height:8.40px;font-weight:400;color:#ececee;white-space:pre;letter-spacing:-0.001px;">Loom – Screen Recorder &amp; Screen Capture is sharing your screen.</div>
<div style="position:absolute;left:903.7px;top:525px;width:68.7px;height:20.9px;background:#4e8be4;border-radius:10.5px"></div>
<div style="position:absolute;left:912.00px;top:532.00px;font-family:'Liberation Sans';font-size:9.15px;line-height:9.15px;font-weight:400;color:#ffffff;white-space:pre;letter-spacing:0.002px;-webkit-text-stroke:0.12px #ffffff;">Stop sharing</div>
<div style="position:absolute;left:977.80px;top:532.00px;font-family:'Liberation Sans';font-size:8.35px;line-height:8.35px;font-weight:400;color:#9ab0d8;white-space:pre;letter-spacing:0.007px;text-decoration:underline;">Hide</div>
<svg style="position:absolute;left:797px;top:28px;" width="8" height="11" viewBox="0 0 8 11"><path d="M1 0.8 V9 L3 7.2 L4.6 10.2 L5.8 9.6 L4.3 6.6 H6.8 Z" fill="#1a1a1a" stroke="#f4f4f4" stroke-width="0.8"/></svg>
</body></html>
